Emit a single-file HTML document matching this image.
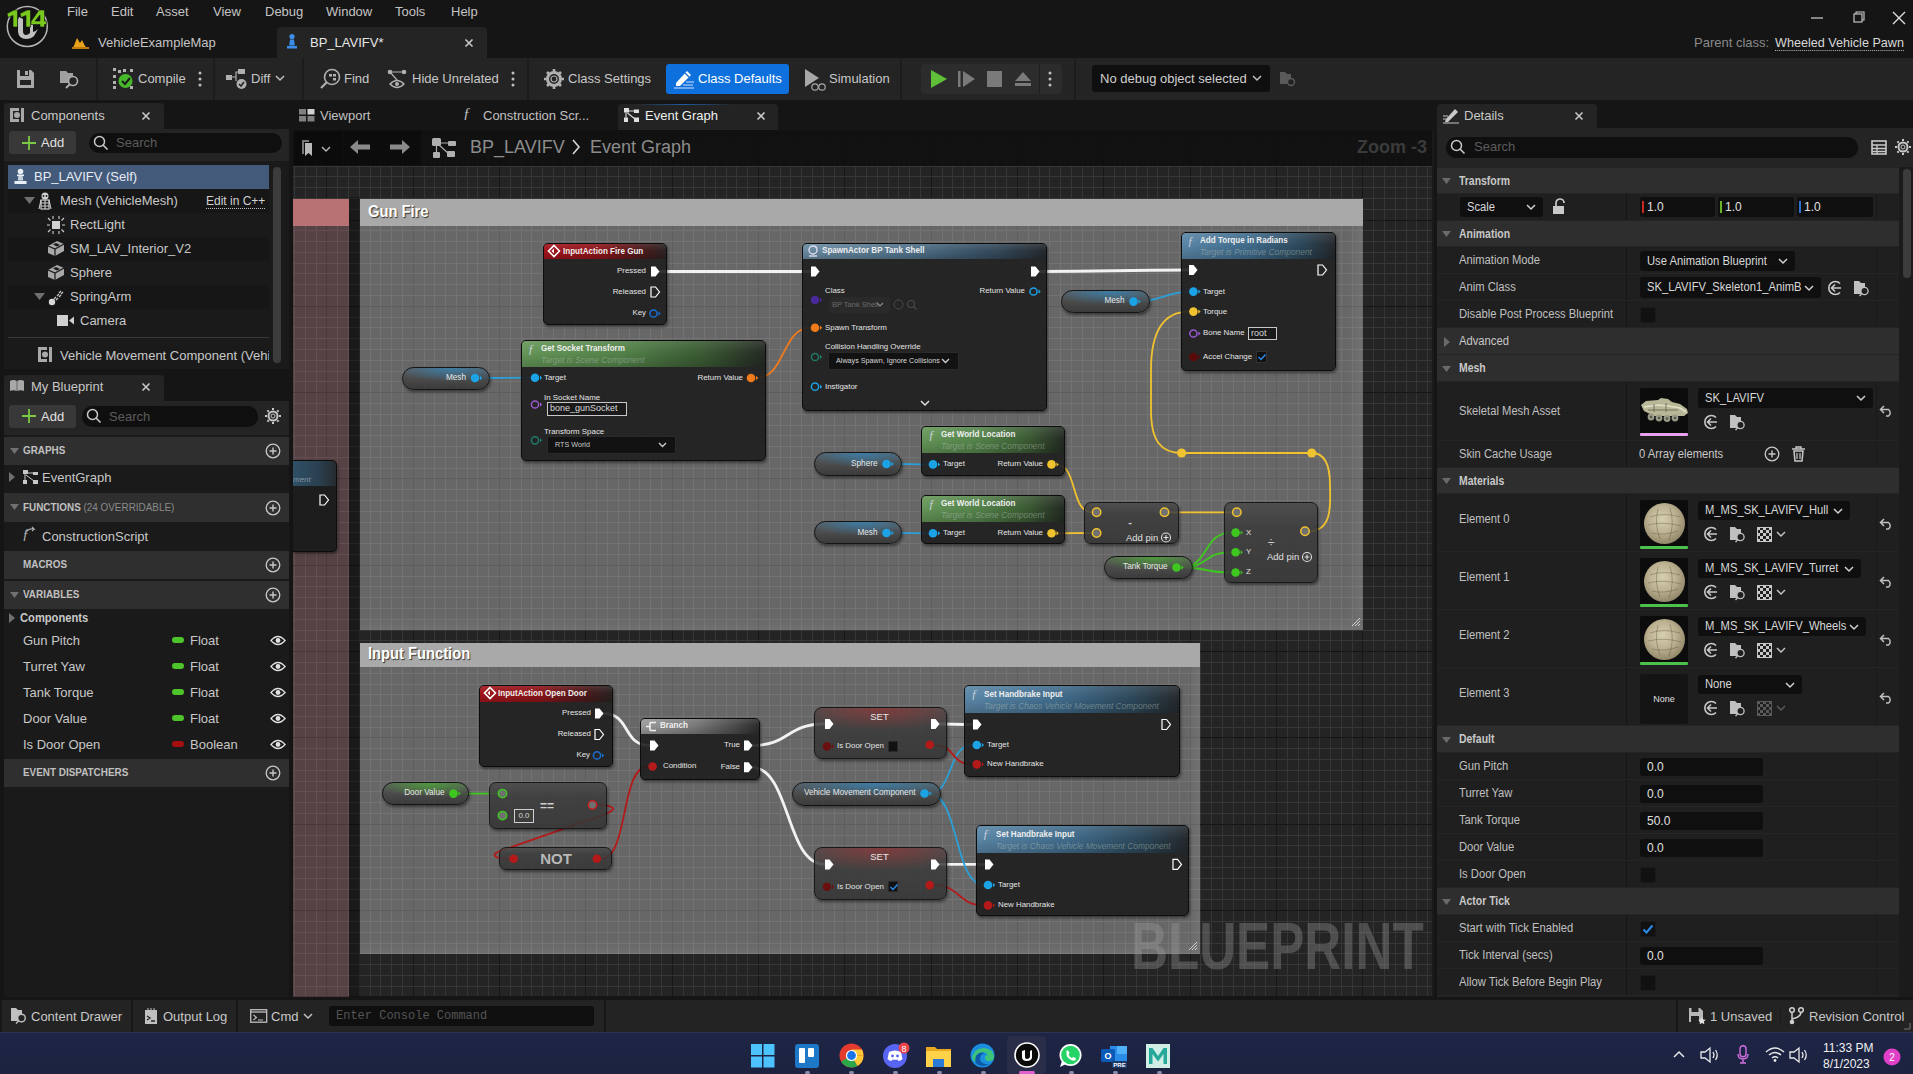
<!DOCTYPE html>
<html><head><meta charset="utf-8">
<style>
*{box-sizing:border-box;margin:0;padding:0}
html,body{width:1913px;height:1074px;overflow:hidden;background:#151515;font-family:"Liberation Sans",sans-serif;color:#c0c0c0;position:relative}
.a{position:absolute}
.t{position:absolute;white-space:nowrap;line-height:1}
svg{position:absolute;overflow:visible}
</style></head><body>


<!-- ============ TITLE BAR ============ -->
<div class="a" style="left:0;top:0;width:1913px;height:58px;background:#151515"></div>
<svg style="left:0;top:0" width="60" height="58">
 <circle cx="27.3" cy="26.5" r="20" fill="#121212" stroke="#b4b4b4" stroke-width="1.5"/>
 <path d="M19 17 q-2 3 -1 7 l0 8 q1 7 8 7 q5 0 8 -3 l4 -7 q-3 3 -5 3 l0 -12 q-2 2 -3 3 l0 10 q-2 2 -4 2 q-3 0 -3 -4 l0 -12 q-2 -1 -4 -2z" fill="#c0c0c0"/>
 <g fill="#78c81e" stroke="#121212" stroke-width="0.6"><path d="M7,13.5 L14,10 L17.5,10 L17.5,27 L13,27 L13,15.5 L8,17.5 Z"/><path d="M20,13.5 L27,10 L30.5,10 L30.5,27 L26,27 L26,15.5 L21,17.5 Z"/><path fill-rule="evenodd" d="M39,10 L44.5,10 L44.5,21 L46.5,21 L46.5,24.5 L44.5,24.5 L44.5,27 L40,27 L40,24.5 L31,24.5 L31,21.5 Z M35,21 L40,21 L40,15 Z"/></g>
</svg>
<div class="t" style="left:67px;top:5px;font-size:13px;color:#c4c4c4">File</div>
<div class="t" style="left:111px;top:5px;font-size:13px;color:#c4c4c4">Edit</div>
<div class="t" style="left:156px;top:5px;font-size:13px;color:#c4c4c4">Asset</div>
<div class="t" style="left:213px;top:5px;font-size:13px;color:#c4c4c4">View</div>
<div class="t" style="left:265px;top:5px;font-size:13px;color:#c4c4c4">Debug</div>
<div class="t" style="left:326px;top:5px;font-size:13px;color:#c4c4c4">Window</div>
<div class="t" style="left:395px;top:5px;font-size:13px;color:#c4c4c4">Tools</div>
<div class="t" style="left:451px;top:5px;font-size:13px;color:#c4c4c4">Help</div>
<!-- map tab -->
<svg style="left:72px;top:34px" width="18" height="16"><path d="M1 14 L5 4 L8 9 L10 6 L13 12 L15 14z" fill="#e8a21a"/><rect x="0" y="13" width="17" height="2" fill="#c07a10"/></svg>
<div class="t" style="left:98px;top:36px;font-size:13px;color:#c4c4c4">VehicleExampleMap</div>
<!-- active tab -->
<div class="a" style="left:277px;top:27px;width:210px;height:31px;background:#242424;border-radius:4px 4px 0 0"></div>
<svg style="left:285px;top:33px" width="14" height="18"><circle cx="7" cy="3.5" r="2.6" fill="#3b8ee8"/><path d="M5 6.5h4l0.8 6h-5.6z" fill="#3b8ee8"/><rect x="2" y="13" width="10" height="2.5" fill="#3b8ee8"/></svg>
<div class="t" style="left:310px;top:36px;font-size:13px;color:#e6e6e6">BP_LAVIFV*</div>
<svg style="left:464px;top:38px" width="10" height="10"><path d="M1.5 1.5L8.5 8.5M8.5 1.5L1.5 8.5" stroke="#c8c8c8" stroke-width="1.6"/></svg>
<!-- window controls -->
<svg style="left:1808px;top:10px" width="100" height="16">
 <path d="M3 8h12" stroke="#d0d0d0" stroke-width="1.2"/>
 <rect x="46" y="4" width="8" height="8" fill="none" stroke="#d0d0d0" stroke-width="1.1"/><path d="M48 4V2h8v8h-2" fill="none" stroke="#d0d0d0" stroke-width="1.1"/>
 <path d="M85 2l12 12M97 2l-12 12" stroke="#e0e0e0" stroke-width="1.4"/>
</svg>
<div class="t" style="left:1694px;top:36px;font-size:13px;color:#8a8a8a">Parent class:</div>
<div class="t" style="left:1775px;top:36px;font-size:13px;color:#d8d8d8;border-bottom:1px dotted #bbb;padding-bottom:1px;transform:scaleX(0.97);transform-origin:left">Wheeled Vehicle Pawn</div>

<!-- ============ TOOLBAR ============ -->
<div class="a" style="left:0;top:58px;width:1913px;height:42px;background:#242424"></div>
<div class="a" style="left:96px;top:58px;width:2px;height:42px;background:#1c1c1c"></div>
<div class="a" style="left:213px;top:58px;width:2px;height:42px;background:#1c1c1c"></div>
<div class="a" style="left:302px;top:58px;width:2px;height:42px;background:#1c1c1c"></div>
<div class="a" style="left:527px;top:58px;width:2px;height:42px;background:#1c1c1c"></div>
<div class="a" style="left:900px;top:58px;width:2px;height:42px;background:#1c1c1c"></div>
<div class="a" style="left:1074px;top:58px;width:2px;height:42px;background:#1c1c1c"></div>
<!-- save -->
<svg style="left:16px;top:69px" width="20" height="20"><path d="M1 1h14l3 3v15H1z" fill="#a8a8a8"/><rect x="4" y="1" width="9" height="6" fill="#242424"/><rect x="9" y="2" width="3" height="4" fill="#a8a8a8"/><rect x="4" y="11" width="11" height="5" fill="#242424"/></svg>
<!-- browse -->
<svg style="left:59px;top:68px" width="22" height="22"><path d="M1 3h6l2 2h5v5H1z" fill="#a0a0a0"/><path d="M1 6h12v9H1z" fill="#a0a0a0"/><circle cx="14" cy="13" r="4.5" fill="#242424" stroke="#b0b0b0" stroke-width="1.6"/><path d="M11 16l-4 4" stroke="#b0b0b0" stroke-width="1.8"/></svg>
<!-- compile -->
<svg style="left:113px;top:68px" width="22" height="22"><g fill="#b0b0b0"><rect x="0" y="0" width="3" height="3"/><rect x="5" y="2" width="3" height="3"/><rect x="10" y="1" width="3" height="3"/><rect x="17" y="1" width="3" height="3"/><rect x="0" y="7" width="3" height="3"/><rect x="0" y="13" width="3" height="3"/><rect x="0" y="18" width="3" height="3"/><rect x="17" y="18" width="3" height="3"/></g><circle cx="12.5" cy="13" r="7" fill="#47b82c"/><path d="M9 13l3 3l5 -6" fill="none" stroke="#1a1a1a" stroke-width="2"/></svg>
<div class="t" style="left:138px;top:72px;font-size:13px;color:#c8c8c8">Compile</div>
<svg style="left:197px;top:70px" width="6" height="18"><circle cx="3" cy="3" r="1.5" fill="#c0c0c0"/><circle cx="3" cy="9" r="1.5" fill="#c0c0c0"/><circle cx="3" cy="15" r="1.5" fill="#c0c0c0"/></svg>
<!-- diff -->
<svg style="left:226px;top:68px" width="24" height="22"><rect x="0" y="7" width="6" height="5" fill="#b0b0b0"/><rect x="12" y="1" width="7" height="5" fill="#b0b0b0"/><path d="M6 9h4v-5h2M10 9v4" fill="none" stroke="#b0b0b0" stroke-width="1.2"/><circle cx="15.5" cy="16" r="5" fill="#b0b0b0"/><path d="M13 16l2 2l3 -4" fill="none" stroke="#242424" stroke-width="1.5"/></svg>
<div class="t" style="left:251px;top:72px;font-size:13px;color:#c8c8c8">Diff</div>
<svg style="left:275px;top:75px" width="10" height="7"><path d="M1 1l4 4l4 -4" fill="none" stroke="#c0c0c0" stroke-width="1.5"/></svg>
<!-- find -->
<svg style="left:319px;top:68px" width="22" height="22"><circle cx="13" cy="9" r="7.5" fill="none" stroke="#b0b0b0" stroke-width="1.6"/><path d="M8 14l-6 6" stroke="#b0b0b0" stroke-width="2.2"/><rect x="10" y="6" width="3" height="2.5" fill="#b0b0b0"/><rect x="14" y="6" width="3" height="2.5" fill="#b0b0b0"/><rect x="14" y="10" width="3" height="2.5" fill="#b0b0b0"/></svg>
<div class="t" style="left:344px;top:72px;font-size:13px;color:#c8c8c8">Find</div>
<!-- hide unrelated -->
<svg style="left:387px;top:68px" width="22" height="22"><circle cx="3" cy="4" r="2.3" fill="#b0b0b0"/><circle cx="17" cy="4" r="2.3" fill="#b0b0b0"/><path d="M3 4h14M3 4l7 8" stroke="#b0b0b0" stroke-width="1.2"/><path d="M3 16q7 -7 14 0q-7 7 -14 0z" fill="none" stroke="#b0b0b0" stroke-width="1.4"/><circle cx="10" cy="16" r="2" fill="#b0b0b0"/></svg>
<div class="t" style="left:412px;top:72px;font-size:13px;color:#c8c8c8">Hide Unrelated</div>
<svg style="left:510px;top:70px" width="6" height="18"><circle cx="3" cy="3" r="1.5" fill="#c0c0c0"/><circle cx="3" cy="9" r="1.5" fill="#c0c0c0"/><circle cx="3" cy="15" r="1.5" fill="#c0c0c0"/></svg>
<!-- class settings -->
<svg style="left:544px;top:68px" width="22" height="22"><g transform="translate(10 11)"><circle r="6.5" fill="none" stroke="#b0b0b0" stroke-width="3"/><circle r="3" fill="none" stroke="#b0b0b0" stroke-width="1.2"/><g stroke="#b0b0b0" stroke-width="2.6"><path d="M0 -10V-7M0 7V10M-10 0H-7M7 0H10M-7 -7L-5 -5M5 5L7 7M-7 7L-5 5M5 -5L7 -7"/></g></g></svg>
<div class="t" style="left:568px;top:72px;font-size:13px;color:#c8c8c8">Class Settings</div>
<!-- class defaults -->
<div class="a" style="left:666px;top:64px;width:123px;height:30px;background:#0e70dc;border-radius:3px"></div>
<svg style="left:673px;top:68px" width="22" height="22"><path d="M3 15L14 3l4 4L7 18H3z" fill="#fff"/><path d="M12 5l4 4" stroke="#0e70dc" stroke-width="1.2"/><path d="M1 20h20M10 17h10M13 14h8" stroke="#cfe3ff" stroke-width="1"/></svg>
<div class="t" style="left:698px;top:72px;font-size:13px;color:#ffffff">Class Defaults</div>
<!-- simulation -->
<svg style="left:803px;top:68px" width="24" height="24"><path d="M2 1l14 9l-14 9z" fill="#a8a8a8"/><circle cx="12" cy="19" r="3.2" fill="#242424" stroke="#a8a8a8" stroke-width="1.2"/><circle cx="19" cy="19" r="3.2" fill="#242424" stroke="#a8a8a8" stroke-width="1.2"/></svg>
<div class="t" style="left:829px;top:72px;font-size:13px;color:#c8c8c8">Simulation</div>
<!-- play group -->
<div class="a" style="left:921px;top:64px;width:141px;height:30px;background:#2c2c2c;border-radius:4px"></div>
<div class="a" style="left:1039px;top:64px;width:1px;height:30px;background:#1f1f1f"></div>
<svg style="left:929px;top:69px" width="20" height="20"><path d="M2 1l16 9l-16 9z" fill="#5fbf38"/></svg>
<svg style="left:958px;top:70px" width="18" height="18"><rect x="0" y="1" width="2.5" height="16" fill="#7a7a7a"/><path d="M5 1l12 8l-12 8z" fill="#7a7a7a"/></svg>
<svg style="left:986px;top:70px" width="18" height="18"><rect x="1" y="1" width="15" height="16" fill="#7a7a7a"/></svg>
<svg style="left:1013px;top:70px" width="20" height="18"><path d="M2 11L10 2l8 9z" fill="#7a7a7a"/><rect x="2" y="13" width="16" height="3" fill="#7a7a7a"/></svg>
<svg style="left:1047px;top:70px" width="6" height="18"><circle cx="3" cy="3" r="1.5" fill="#c0c0c0"/><circle cx="3" cy="9" r="1.5" fill="#c0c0c0"/><circle cx="3" cy="15" r="1.5" fill="#c0c0c0"/></svg>
<!-- debug dropdown -->
<div class="a" style="left:1092px;top:65px;width:178px;height:27px;background:#0f0f0f;border-radius:3px"></div>
<div class="t" style="left:1100px;top:72px;font-size:13px;color:#d0d0d0">No debug object selected</div>
<svg style="left:1252px;top:75px" width="10" height="7"><path d="M1 1l4 4l4 -4" fill="none" stroke="#c0c0c0" stroke-width="1.5"/></svg>
<svg style="left:1279px;top:70px" width="18" height="18"><path d="M1 2h5l2 2h4v4H1z" fill="#5a5a5a"/><path d="M1 5h10v9H1z" fill="#5a5a5a"/><circle cx="12" cy="12" r="3.5" fill="#242424" stroke="#5a5a5a" stroke-width="1.4"/></svg>

<!-- ============ LEFT PANEL ============ -->
<div class="a" style="left:0;top:100px;width:293px;height:898px;background:#151515"></div>
<!-- components tab -->
<div class="a" style="left:4px;top:103px;width:160px;height:27px;background:#242424;border-radius:4px 4px 0 0"></div>
<div class="a" style="left:4px;top:129px;width:285px;height:240px;background:#242424"></div>
<svg style="left:10px;top:108px" width="16" height="15"><path d="M0 0h9v3H3v8h6v3H0z" fill="#a8a8a8"/><circle cx="7" cy="7" r="3" fill="#a8a8a8"/><rect x="11" y="0" width="3" height="14" fill="#a8a8a8"/></svg>
<div class="t" style="left:31px;top:109px;font-size:13px;color:#c8c8c8">Components</div>
<svg style="left:141px;top:111px" width="10" height="10"><path d="M1.5 1.5L8.5 8.5M8.5 1.5L1.5 8.5" stroke="#c8c8c8" stroke-width="1.6"/></svg>
<div class="a" style="left:9px;top:131px;width:67px;height:23px;background:#383838;border-radius:3px"></div>
<svg style="left:22px;top:136px" width="14" height="14"><path d="M7 0v14M0 7h14" stroke="#7cc943" stroke-width="1.8"/></svg>
<div class="t" style="left:41px;top:136px;font-size:13px;color:#e0e0e0">Add</div>
<div class="a" style="left:89px;top:133px;width:193px;height:20px;background:#0f0f0f;border-radius:10px"></div>
<svg style="left:93px;top:135px" width="16" height="16"><circle cx="6.5" cy="6.5" r="5" fill="none" stroke="#c8c8c8" stroke-width="1.5"/><path d="M10 10l4.5 4.5" stroke="#c8c8c8" stroke-width="1.6"/></svg>
<div class="t" style="left:116px;top:136px;font-size:13px;color:#5c5c5c">Search</div>
<div class="a" style="left:4px;top:161px;width:285px;height:208px;background:#1a1a1a"></div>
<!-- tree rows -->
<div class="a" style="left:8px;top:165px;width:261px;height:24px;background:#435a7a"></div>
<div class="a" style="left:8px;top:189px;width:261px;height:24px;background:#161616"></div>
<div class="a" style="left:8px;top:237px;width:261px;height:24px;background:#161616"></div>
<div class="a" style="left:8px;top:285px;width:261px;height:24px;background:#161616"></div>
<div class="a" style="left:8px;top:337px;width:261px;height:1px;background:#3a3a3a"></div>
<svg style="left:14px;top:168px" width="13" height="17"><circle cx="6.5" cy="3.5" r="2.8" fill="#e8eef5"/><path d="M4.5 7h4l0.7 5.5h-5.4z" fill="#c8d2de"/><rect x="3" y="6.5" width="7" height="1.6" fill="#e8eef5"/><rect x="0.5" y="13" width="12" height="3" fill="#e8eef5"/></svg>
<div class="t" style="left:34px;top:170px;font-size:13px;color:#e6ecf4">BP_LAVIFV (Self)</div>
<svg style="left:24px;top:197px" width="12" height="8"><path d="M0 0h11l-5.5 7z" fill="#707070"/></svg>
<svg style="left:38px;top:192px" width="15" height="18"><circle cx="7" cy="4" r="3.5" fill="#d0d0d0"/><rect x="3" y="8" width="8" height="9" fill="none" stroke="#d0d0d0" stroke-width="1.2"/><path d="M3 11h8M3 14h8M7 8v9M1 17l2 -9M13 17l-2 -9" stroke="#d0d0d0" stroke-width="1.1"/><circle cx="5.5" cy="4" r="0.9" fill="#1a1a1a"/><circle cx="8.5" cy="4" r="0.9" fill="#1a1a1a"/></svg>
<div class="t" style="left:60px;top:194px;font-size:13px;color:#c8c8c8">Mesh (VehicleMesh)</div>
<div class="t" style="left:206px;top:195px;font-size:12px;color:#d0d0d0;border-bottom:1px dotted #c0c0c0;padding-bottom:1px">Edit in C++</div>
<svg style="left:47px;top:216px" width="18" height="18"><rect x="5" y="5" width="8" height="8" fill="#d0d0d0"/><g stroke="#d0d0d0" stroke-width="1.1"><path d="M6 0v3M12 0v3M6 15v3M12 15v3M0 9h3M15 9h3M1 2l2.5 2.5M17 2l-2.5 2.5M1 16l2.5-2.5M17 16l-2.5-2.5"/></g></svg>
<div class="t" style="left:70px;top:218px;font-size:13px;color:#c8c8c8">RectLight</div>
<svg style="left:47px;top:240px" width="18" height="17"><path d="M1 6l9 -5l7 3v7l-9 5l-7 -3z" fill="#a8a8a8"/><path d="M1 6l7 3l9 -5M8 9v7" stroke="#1a1a1a" stroke-width="1.2" fill="none"/><path d="M6 4.5l4 2l3 -1.5l-4 -2z" fill="#1a1a1a"/></svg>
<div class="t" style="left:70px;top:242px;font-size:13px;color:#c8c8c8">SM_LAV_Interior_V2</div>
<svg style="left:47px;top:264px" width="18" height="17"><path d="M1 6l9 -5l7 3v7l-9 5l-7 -3z" fill="#a8a8a8"/><path d="M1 6l7 3l9 -5M8 9v7" stroke="#1a1a1a" stroke-width="1.2" fill="none"/><path d="M6 4.5l4 2l3 -1.5l-4 -2z" fill="#1a1a1a"/></svg>
<div class="t" style="left:70px;top:266px;font-size:13px;color:#c8c8c8">Sphere</div>
<svg style="left:34px;top:293px" width="12" height="8"><path d="M0 0h11l-5.5 7z" fill="#707070"/></svg>
<svg style="left:48px;top:288px" width="16" height="18"><circle cx="4" cy="14" r="3.2" fill="#d8d8d8"/><path d="M6 11l2 -2M8 12l2 -2M9 8l2-2M11 9l2-2M11 5l2 -2M13 6l2 -2" stroke="#c8c8c8" stroke-width="1.2"/></svg>
<div class="t" style="left:70px;top:290px;font-size:13px;color:#c8c8c8">SpringArm</div>
<svg style="left:57px;top:314px" width="18" height="14"><rect x="0" y="1" width="11" height="11" fill="#d0d0d0"/><path d="M12 6.5l5 -4v8z" fill="#d0d0d0"/></svg>
<div class="t" style="left:80px;top:314px;font-size:13px;color:#c8c8c8">Camera</div>
<svg style="left:38px;top:347px" width="15" height="16"><path d="M0 0h9v3H3v9h6v3H0z" fill="#a8a8a8"/><circle cx="7" cy="7.5" r="3" fill="#a8a8a8"/><rect x="11" y="0" width="3" height="15" fill="#a8a8a8"/></svg>
<div class="a" style="left:60px;top:349px;width:209px;height:16px;overflow:hidden"><div class="t" style="left:0;top:0;font-size:13px;color:#c8c8c8">Vehicle Movement Component (Vehicle)</div></div>
<div class="a" style="left:273px;top:167px;width:8px;height:196px;background:#3c3c3c;border-radius:4px"></div>

<!-- my blueprint tab -->
<div class="a" style="left:4px;top:375px;width:160px;height:27px;background:#242424;border-radius:4px 4px 0 0"></div>
<div class="a" style="left:4px;top:401px;width:285px;height:596px;background:#1a1a1a"></div>
<div class="a" style="left:4px;top:401px;width:285px;height:34px;background:#242424"></div>
<svg style="left:9px;top:379px" width="16" height="14"><path d="M1 2q3 -2 7 0q4 -2 7 0v10q-3 -1.5 -7 0q-4 -1.5 -7 0z" fill="#a8a8a8"/><path d="M8 2v10" stroke="#555" stroke-width="0.8"/></svg>
<div class="t" style="left:31px;top:380px;font-size:13px;color:#c8c8c8">My Blueprint</div>
<svg style="left:141px;top:382px" width="10" height="10"><path d="M1.5 1.5L8.5 8.5M8.5 1.5L1.5 8.5" stroke="#c8c8c8" stroke-width="1.6"/></svg>
<div class="a" style="left:9px;top:405px;width:67px;height:23px;background:#383838;border-radius:3px"></div>
<svg style="left:22px;top:409px" width="14" height="14"><path d="M7 0v14M0 7h14" stroke="#7cc943" stroke-width="1.8"/></svg>
<div class="t" style="left:41px;top:410px;font-size:13px;color:#e0e0e0">Add</div>
<div class="a" style="left:82px;top:406px;width:176px;height:21px;background:#0f0f0f;border-radius:10px"></div>
<svg style="left:86px;top:408px" width="16" height="16"><circle cx="6.5" cy="6.5" r="5" fill="none" stroke="#c8c8c8" stroke-width="1.5"/><path d="M10 10l4.5 4.5" stroke="#c8c8c8" stroke-width="1.6"/></svg>
<div class="t" style="left:109px;top:410px;font-size:13px;color:#5c5c5c">Search</div>
<svg style="left:265px;top:408px" width="16" height="16"><g transform="translate(8 8)"><circle r="4.5" fill="none" stroke="#c8c8c8" stroke-width="2"/><circle r="2" fill="none" stroke="#c8c8c8" stroke-width="1"/><g stroke="#c8c8c8" stroke-width="2"><path d="M0 -8V-6M0 6V8M-8 0H-6M6 0H8M-5.6 -5.6L-4.2 -4.2M4.2 4.2L5.6 5.6M-5.6 5.6L-4.2 4.2M4.2 -4.2L5.6 -5.6"/></g></g></svg>
<!-- section headers -->
<div class="a" style="left:4px;top:437px;width:285px;height:28px;background:#2f2f2f"></div>
<svg style="left:10px;top:448px" width="10" height="7"><path d="M0 0h9l-4.5 6z" fill="#707070"/></svg>
<div class="t" style="left:23px;top:445px;font-size:11px;font-weight:bold;color:#c0c0c0;transform:scaleX(0.9);transform-origin:left">GRAPHS</div>
<svg style="left:265px;top:443px" width="16" height="16"><circle cx="8" cy="8" r="6.8" fill="none" stroke="#c8c8c8" stroke-width="1.3"/><path d="M8 4.5v7M4.5 8h7" stroke="#c8c8c8" stroke-width="1.4"/></svg>
<svg style="left:9px;top:472px" width="7" height="11"><path d="M0 0v10l6 -5z" fill="#707070"/></svg>
<svg style="left:23px;top:470px" width="16" height="14"><rect x="0" y="0" width="5" height="4" fill="#c8c8c8"/><rect x="10" y="2" width="5" height="3" fill="#c8c8c8"/><rect x="0" y="10" width="4" height="4" fill="#c8c8c8"/><rect x="10" y="10" width="5" height="4" fill="#c8c8c8"/><path d="M2 4v6M5 3h5M3 5l8 6" stroke="#c8c8c8" stroke-width="1"/></svg>
<div class="t" style="left:42px;top:471px;font-size:13px;color:#c8c8c8">EventGraph</div>
<div class="a" style="left:4px;top:493px;width:285px;height:29px;background:#2f2f2f"></div>
<svg style="left:10px;top:504px" width="10" height="7"><path d="M0 0h9l-4.5 6z" fill="#707070"/></svg>
<div class="t" style="left:23px;top:502px;font-size:11px;color:#c0c0c0;transform:scaleX(0.9);transform-origin:left"><b>FUNCTIONS</b> <span style="color:#8a8a8a">(24 OVERRIDABLE)</span></div>
<svg style="left:265px;top:500px" width="16" height="16"><circle cx="8" cy="8" r="6.8" fill="none" stroke="#c8c8c8" stroke-width="1.3"/><path d="M8 4.5v7M4.5 8h7" stroke="#c8c8c8" stroke-width="1.4"/></svg>
<div class="t" style="left:22px;top:527px;font-size:15px;font-style:italic;font-family:'Liberation Serif';color:#b0b0b0">&#402;</div>
<svg style="left:25px;top:527px" width="12" height="6"><path d="M1 5q3 -4 8 -3l-2 -2M9 2l-2 2" stroke="#b0b0b0" stroke-width="1.1" fill="none"/></svg>
<div class="t" style="left:42px;top:530px;font-size:13px;color:#c8c8c8">ConstructionScript</div>
<div class="a" style="left:4px;top:551px;width:285px;height:28px;background:#2f2f2f"></div>
<div class="t" style="left:23px;top:559px;font-size:11px;font-weight:bold;color:#c0c0c0;transform:scaleX(0.9);transform-origin:left">MACROS</div>
<svg style="left:265px;top:557px" width="16" height="16"><circle cx="8" cy="8" r="6.8" fill="none" stroke="#c8c8c8" stroke-width="1.3"/><path d="M8 4.5v7M4.5 8h7" stroke="#c8c8c8" stroke-width="1.4"/></svg>
<div class="a" style="left:4px;top:581px;width:285px;height:28px;background:#2f2f2f"></div>
<svg style="left:10px;top:592px" width="10" height="7"><path d="M0 0h9l-4.5 6z" fill="#707070"/></svg>
<div class="t" style="left:23px;top:589px;font-size:11px;font-weight:bold;color:#c0c0c0;transform:scaleX(0.9);transform-origin:left">VARIABLES</div>
<svg style="left:265px;top:587px" width="16" height="16"><circle cx="8" cy="8" r="6.8" fill="none" stroke="#c8c8c8" stroke-width="1.3"/><path d="M8 4.5v7M4.5 8h7" stroke="#c8c8c8" stroke-width="1.4"/></svg>
<svg style="left:9px;top:613px" width="7" height="11"><path d="M0 0v10l6 -5z" fill="#707070"/></svg>
<div class="t" style="left:20px;top:612px;font-size:12px;font-weight:bold;color:#c8c8c8;transform:scaleX(0.93);transform-origin:left">Components</div>
<div class="t" style="left:23px;top:634px;font-size:13px;color:#c8c8c8">Gun Pitch</div>
<div class="a" style="left:172px;top:637px;width:12px;height:6px;background:#4fc42a;border-radius:3px"></div>
<div class="t" style="left:190px;top:634px;font-size:13px;color:#c8c8c8">Float</div>
<svg style="left:270px;top:635px" width="16" height="11"><path d="M1 5.5q7 -8 14 0q-7 8 -14 0z" fill="none" stroke="#e0e0e0" stroke-width="1.4"/><circle cx="8" cy="5.5" r="2.4" fill="#e0e0e0"/></svg>
<div class="t" style="left:23px;top:660px;font-size:13px;color:#c8c8c8">Turret Yaw</div>
<div class="a" style="left:172px;top:663px;width:12px;height:6px;background:#4fc42a;border-radius:3px"></div>
<div class="t" style="left:190px;top:660px;font-size:13px;color:#c8c8c8">Float</div>
<svg style="left:270px;top:661px" width="16" height="11"><path d="M1 5.5q7 -8 14 0q-7 8 -14 0z" fill="none" stroke="#e0e0e0" stroke-width="1.4"/><circle cx="8" cy="5.5" r="2.4" fill="#e0e0e0"/></svg>
<div class="t" style="left:23px;top:686px;font-size:13px;color:#c8c8c8">Tank Torque</div>
<div class="a" style="left:172px;top:689px;width:12px;height:6px;background:#4fc42a;border-radius:3px"></div>
<div class="t" style="left:190px;top:686px;font-size:13px;color:#c8c8c8">Float</div>
<svg style="left:270px;top:687px" width="16" height="11"><path d="M1 5.5q7 -8 14 0q-7 8 -14 0z" fill="none" stroke="#e0e0e0" stroke-width="1.4"/><circle cx="8" cy="5.5" r="2.4" fill="#e0e0e0"/></svg>
<div class="t" style="left:23px;top:712px;font-size:13px;color:#c8c8c8">Door Value</div>
<div class="a" style="left:172px;top:715px;width:12px;height:6px;background:#4fc42a;border-radius:3px"></div>
<div class="t" style="left:190px;top:712px;font-size:13px;color:#c8c8c8">Float</div>
<svg style="left:270px;top:713px" width="16" height="11"><path d="M1 5.5q7 -8 14 0q-7 8 -14 0z" fill="none" stroke="#e0e0e0" stroke-width="1.4"/><circle cx="8" cy="5.5" r="2.4" fill="#e0e0e0"/></svg>
<div class="t" style="left:23px;top:738px;font-size:13px;color:#c8c8c8">Is Door Open</div>
<div class="a" style="left:172px;top:741px;width:12px;height:6px;background:#a80e0e;border-radius:3px"></div>
<div class="t" style="left:190px;top:738px;font-size:13px;color:#c8c8c8">Boolean</div>
<svg style="left:270px;top:739px" width="16" height="11"><path d="M1 5.5q7 -8 14 0q-7 8 -14 0z" fill="none" stroke="#e0e0e0" stroke-width="1.4"/><circle cx="8" cy="5.5" r="2.4" fill="#e0e0e0"/></svg>

<div class="a" style="left:4px;top:759px;width:285px;height:28px;background:#2f2f2f"></div>
<div class="t" style="left:23px;top:767px;font-size:11px;font-weight:bold;color:#c0c0c0;transform:scaleX(0.9);transform-origin:left">EVENT DISPATCHERS</div>
<svg style="left:265px;top:765px" width="16" height="16"><circle cx="8" cy="8" r="6.8" fill="none" stroke="#c8c8c8" stroke-width="1.3"/><path d="M8 4.5v7M4.5 8h7" stroke="#c8c8c8" stroke-width="1.4"/></svg>

<div class="a" style="left:293px;top:100px;width:1141px;height:898px;background:#151515"></div>
<div class="a" style="left:293px;top:130px;width:1141px;height:868px;background:#242424;overflow:hidden">
<svg style="left:0;top:0" width="1141" height="868"><rect x="-10" y="0" width="1" height="868" fill="#363636"/><rect x="1" y="0" width="1" height="868" fill="#363636"/><rect x="12" y="0" width="1" height="868" fill="#363636"/><rect x="23" y="0" width="1" height="868" fill="#363636"/><rect x="33" y="0" width="1" height="868" fill="#161616"/><rect x="44" y="0" width="1" height="868" fill="#363636"/><rect x="55" y="0" width="1" height="868" fill="#363636"/><rect x="66" y="0" width="1" height="868" fill="#363636"/><rect x="77" y="0" width="1" height="868" fill="#363636"/><rect x="87" y="0" width="1" height="868" fill="#363636"/><rect x="98" y="0" width="1" height="868" fill="#363636"/><rect x="109" y="0" width="1" height="868" fill="#363636"/><rect x="120" y="0" width="1" height="868" fill="#161616"/><rect x="131" y="0" width="1" height="868" fill="#363636"/><rect x="141" y="0" width="1" height="868" fill="#363636"/><rect x="152" y="0" width="1" height="868" fill="#363636"/><rect x="163" y="0" width="1" height="868" fill="#363636"/><rect x="174" y="0" width="1" height="868" fill="#363636"/><rect x="184" y="0" width="1" height="868" fill="#363636"/><rect x="195" y="0" width="1" height="868" fill="#363636"/><rect x="206" y="0" width="1" height="868" fill="#161616"/><rect x="217" y="0" width="1" height="868" fill="#363636"/><rect x="228" y="0" width="1" height="868" fill="#363636"/><rect x="238" y="0" width="1" height="868" fill="#363636"/><rect x="249" y="0" width="1" height="868" fill="#363636"/><rect x="260" y="0" width="1" height="868" fill="#363636"/><rect x="271" y="0" width="1" height="868" fill="#363636"/><rect x="282" y="0" width="1" height="868" fill="#363636"/><rect x="292" y="0" width="1" height="868" fill="#161616"/><rect x="303" y="0" width="1" height="868" fill="#363636"/><rect x="314" y="0" width="1" height="868" fill="#363636"/><rect x="325" y="0" width="1" height="868" fill="#363636"/><rect x="336" y="0" width="1" height="868" fill="#363636"/><rect x="346" y="0" width="1" height="868" fill="#363636"/><rect x="357" y="0" width="1" height="868" fill="#363636"/><rect x="368" y="0" width="1" height="868" fill="#363636"/><rect x="379" y="0" width="1" height="868" fill="#161616"/><rect x="390" y="0" width="1" height="868" fill="#363636"/><rect x="400" y="0" width="1" height="868" fill="#363636"/><rect x="411" y="0" width="1" height="868" fill="#363636"/><rect x="422" y="0" width="1" height="868" fill="#363636"/><rect x="433" y="0" width="1" height="868" fill="#363636"/><rect x="443" y="0" width="1" height="868" fill="#363636"/><rect x="454" y="0" width="1" height="868" fill="#363636"/><rect x="465" y="0" width="1" height="868" fill="#161616"/><rect x="476" y="0" width="1" height="868" fill="#363636"/><rect x="487" y="0" width="1" height="868" fill="#363636"/><rect x="497" y="0" width="1" height="868" fill="#363636"/><rect x="508" y="0" width="1" height="868" fill="#363636"/><rect x="519" y="0" width="1" height="868" fill="#363636"/><rect x="530" y="0" width="1" height="868" fill="#363636"/><rect x="541" y="0" width="1" height="868" fill="#363636"/><rect x="551" y="0" width="1" height="868" fill="#161616"/><rect x="562" y="0" width="1" height="868" fill="#363636"/><rect x="573" y="0" width="1" height="868" fill="#363636"/><rect x="584" y="0" width="1" height="868" fill="#363636"/><rect x="595" y="0" width="1" height="868" fill="#363636"/><rect x="605" y="0" width="1" height="868" fill="#363636"/><rect x="616" y="0" width="1" height="868" fill="#363636"/><rect x="627" y="0" width="1" height="868" fill="#363636"/><rect x="638" y="0" width="1" height="868" fill="#161616"/><rect x="649" y="0" width="1" height="868" fill="#363636"/><rect x="659" y="0" width="1" height="868" fill="#363636"/><rect x="670" y="0" width="1" height="868" fill="#363636"/><rect x="681" y="0" width="1" height="868" fill="#363636"/><rect x="692" y="0" width="1" height="868" fill="#363636"/><rect x="702" y="0" width="1" height="868" fill="#363636"/><rect x="713" y="0" width="1" height="868" fill="#363636"/><rect x="724" y="0" width="1" height="868" fill="#161616"/><rect x="735" y="0" width="1" height="868" fill="#363636"/><rect x="746" y="0" width="1" height="868" fill="#363636"/><rect x="756" y="0" width="1" height="868" fill="#363636"/><rect x="767" y="0" width="1" height="868" fill="#363636"/><rect x="778" y="0" width="1" height="868" fill="#363636"/><rect x="789" y="0" width="1" height="868" fill="#363636"/><rect x="800" y="0" width="1" height="868" fill="#363636"/><rect x="810" y="0" width="1" height="868" fill="#161616"/><rect x="821" y="0" width="1" height="868" fill="#363636"/><rect x="832" y="0" width="1" height="868" fill="#363636"/><rect x="843" y="0" width="1" height="868" fill="#363636"/><rect x="854" y="0" width="1" height="868" fill="#363636"/><rect x="864" y="0" width="1" height="868" fill="#363636"/><rect x="875" y="0" width="1" height="868" fill="#363636"/><rect x="886" y="0" width="1" height="868" fill="#363636"/><rect x="897" y="0" width="1" height="868" fill="#161616"/><rect x="907" y="0" width="1" height="868" fill="#363636"/><rect x="918" y="0" width="1" height="868" fill="#363636"/><rect x="929" y="0" width="1" height="868" fill="#363636"/><rect x="940" y="0" width="1" height="868" fill="#363636"/><rect x="951" y="0" width="1" height="868" fill="#363636"/><rect x="961" y="0" width="1" height="868" fill="#363636"/><rect x="972" y="0" width="1" height="868" fill="#363636"/><rect x="983" y="0" width="1" height="868" fill="#161616"/><rect x="994" y="0" width="1" height="868" fill="#363636"/><rect x="1005" y="0" width="1" height="868" fill="#363636"/><rect x="1015" y="0" width="1" height="868" fill="#363636"/><rect x="1026" y="0" width="1" height="868" fill="#363636"/><rect x="1037" y="0" width="1" height="868" fill="#363636"/><rect x="1048" y="0" width="1" height="868" fill="#363636"/><rect x="1059" y="0" width="1" height="868" fill="#363636"/><rect x="1069" y="0" width="1" height="868" fill="#161616"/><rect x="1080" y="0" width="1" height="868" fill="#363636"/><rect x="1091" y="0" width="1" height="868" fill="#363636"/><rect x="1102" y="0" width="1" height="868" fill="#363636"/><rect x="1113" y="0" width="1" height="868" fill="#363636"/><rect x="1123" y="0" width="1" height="868" fill="#363636"/><rect x="1134" y="0" width="1" height="868" fill="#363636"/><rect x="0" y="-8" width="1141" height="1" fill="#363636"/><rect x="0" y="3" width="1141" height="1" fill="#161616"/><rect x="0" y="14" width="1141" height="1" fill="#363636"/><rect x="0" y="25" width="1141" height="1" fill="#363636"/><rect x="0" y="36" width="1141" height="1" fill="#363636"/><rect x="0" y="46" width="1141" height="1" fill="#363636"/><rect x="0" y="57" width="1141" height="1" fill="#363636"/><rect x="0" y="68" width="1141" height="1" fill="#363636"/><rect x="0" y="79" width="1141" height="1" fill="#363636"/><rect x="0" y="90" width="1141" height="1" fill="#161616"/><rect x="0" y="100" width="1141" height="1" fill="#363636"/><rect x="0" y="111" width="1141" height="1" fill="#363636"/><rect x="0" y="122" width="1141" height="1" fill="#363636"/><rect x="0" y="133" width="1141" height="1" fill="#363636"/><rect x="0" y="143" width="1141" height="1" fill="#363636"/><rect x="0" y="154" width="1141" height="1" fill="#363636"/><rect x="0" y="165" width="1141" height="1" fill="#363636"/><rect x="0" y="176" width="1141" height="1" fill="#161616"/><rect x="0" y="187" width="1141" height="1" fill="#363636"/><rect x="0" y="197" width="1141" height="1" fill="#363636"/><rect x="0" y="208" width="1141" height="1" fill="#363636"/><rect x="0" y="219" width="1141" height="1" fill="#363636"/><rect x="0" y="230" width="1141" height="1" fill="#363636"/><rect x="0" y="241" width="1141" height="1" fill="#363636"/><rect x="0" y="251" width="1141" height="1" fill="#363636"/><rect x="0" y="262" width="1141" height="1" fill="#161616"/><rect x="0" y="273" width="1141" height="1" fill="#363636"/><rect x="0" y="284" width="1141" height="1" fill="#363636"/><rect x="0" y="295" width="1141" height="1" fill="#363636"/><rect x="0" y="305" width="1141" height="1" fill="#363636"/><rect x="0" y="316" width="1141" height="1" fill="#363636"/><rect x="0" y="327" width="1141" height="1" fill="#363636"/><rect x="0" y="338" width="1141" height="1" fill="#363636"/><rect x="0" y="348" width="1141" height="1" fill="#161616"/><rect x="0" y="359" width="1141" height="1" fill="#363636"/><rect x="0" y="370" width="1141" height="1" fill="#363636"/><rect x="0" y="381" width="1141" height="1" fill="#363636"/><rect x="0" y="392" width="1141" height="1" fill="#363636"/><rect x="0" y="402" width="1141" height="1" fill="#363636"/><rect x="0" y="413" width="1141" height="1" fill="#363636"/><rect x="0" y="424" width="1141" height="1" fill="#363636"/><rect x="0" y="435" width="1141" height="1" fill="#161616"/><rect x="0" y="446" width="1141" height="1" fill="#363636"/><rect x="0" y="456" width="1141" height="1" fill="#363636"/><rect x="0" y="467" width="1141" height="1" fill="#363636"/><rect x="0" y="478" width="1141" height="1" fill="#363636"/><rect x="0" y="489" width="1141" height="1" fill="#363636"/><rect x="0" y="500" width="1141" height="1" fill="#363636"/><rect x="0" y="510" width="1141" height="1" fill="#363636"/><rect x="0" y="521" width="1141" height="1" fill="#161616"/><rect x="0" y="532" width="1141" height="1" fill="#363636"/><rect x="0" y="543" width="1141" height="1" fill="#363636"/><rect x="0" y="554" width="1141" height="1" fill="#363636"/><rect x="0" y="564" width="1141" height="1" fill="#363636"/><rect x="0" y="575" width="1141" height="1" fill="#363636"/><rect x="0" y="586" width="1141" height="1" fill="#363636"/><rect x="0" y="597" width="1141" height="1" fill="#363636"/><rect x="0" y="607" width="1141" height="1" fill="#161616"/><rect x="0" y="618" width="1141" height="1" fill="#363636"/><rect x="0" y="629" width="1141" height="1" fill="#363636"/><rect x="0" y="640" width="1141" height="1" fill="#363636"/><rect x="0" y="651" width="1141" height="1" fill="#363636"/><rect x="0" y="661" width="1141" height="1" fill="#363636"/><rect x="0" y="672" width="1141" height="1" fill="#363636"/><rect x="0" y="683" width="1141" height="1" fill="#363636"/><rect x="0" y="694" width="1141" height="1" fill="#161616"/><rect x="0" y="705" width="1141" height="1" fill="#363636"/><rect x="0" y="715" width="1141" height="1" fill="#363636"/><rect x="0" y="726" width="1141" height="1" fill="#363636"/><rect x="0" y="737" width="1141" height="1" fill="#363636"/><rect x="0" y="748" width="1141" height="1" fill="#363636"/><rect x="0" y="759" width="1141" height="1" fill="#363636"/><rect x="0" y="769" width="1141" height="1" fill="#363636"/><rect x="0" y="780" width="1141" height="1" fill="#161616"/><rect x="0" y="791" width="1141" height="1" fill="#363636"/><rect x="0" y="802" width="1141" height="1" fill="#363636"/><rect x="0" y="813" width="1141" height="1" fill="#363636"/><rect x="0" y="823" width="1141" height="1" fill="#363636"/><rect x="0" y="834" width="1141" height="1" fill="#363636"/><rect x="0" y="845" width="1141" height="1" fill="#363636"/><rect x="0" y="856" width="1141" height="1" fill="#363636"/><rect x="0" y="866" width="1141" height="1" fill="#161616"/></svg>
</div>
<div class="a" style="left:293px;top:199px;width:56px;height:799px;background:rgba(215,145,150,0.28);box-shadow:none"></div>
<div class="a" style="left:293px;top:199px;width:56px;height:27px;background:#b87274"></div>
<div class="a" style="left:349px;top:197px;width:11px;height:801px;background:rgba(10,10,10,0.4)"></div>
<div class="a" style="left:360px;top:199px;width:1003px;height:431px;background:rgba(255,255,255,0.305);box-shadow:inset -10px -8px 14px -4px rgba(255,255,255,0.09)"></div>
<div class="a" style="left:360px;top:199px;width:1003px;height:27px;background:#a9a9a9"></div>
<div class="t" style="left:368px;top:203.7px;font-size:16px;font-weight:bold;color:#fff;text-shadow:1px 1px 1px #333;transform:scaleX(0.92);transform-origin:left">Gun Fire</div>
<div class="a" style="left:360px;top:643px;width:840px;height:311px;background:rgba(255,255,255,0.305);box-shadow:inset -10px -8px 14px -4px rgba(255,255,255,0.09)"></div>
<div class="a" style="left:360px;top:643px;width:840px;height:24px;background:#a9a9a9"></div>
<div class="t" style="left:368px;top:646.2px;font-size:16px;font-weight:bold;color:#fff;text-shadow:1px 1px 1px #333;transform:scaleX(0.92);transform-origin:left">Input Function</div>
<svg style="left:1351px;top:617px" width="10" height="10"><path d="M9 1L1 9M9 4L4 9M9 7L7 9" stroke="#ddd" stroke-width="0.9"/></svg>
<svg style="left:1188px;top:941px" width="10" height="10"><path d="M9 1L1 9M9 4L4 9M9 7L7 9" stroke="#ddd" stroke-width="0.9"/></svg>
<div class="t" style="left:1131px;top:913px;font-size:66px;font-weight:bold;color:rgba(160,160,160,0.34);transform:scaleX(0.775);transform-origin:left;letter-spacing:0px">BLUEPRINT</div>
<svg style="left:299px;top:109px" width="16" height="13"><g fill="#808080"><rect x="0" y="0" width="7" height="5.5"/><rect x="8.5" y="0" width="7" height="5.5" fill="#d0d0d0"/><rect x="0" y="7" width="7" height="5.5"/><rect x="8.5" y="7" width="7" height="5.5"/></g></svg>
<div class="t" style="left:320px;top:109px;font-size:13px;color:#c0c0c0">Viewport</div>
<div class="t" style="left:463px;top:106px;font-size:15px;font-style:italic;font-family:'Liberation Serif';color:#c0c0c0">&#402;</div>
<div class="t" style="left:483px;top:109px;font-size:13px;color:#c0c0c0">Construction Scr...</div>
<div class="a" style="left:618px;top:104px;width:160px;height:26px;background:#232323;border-radius:4px 4px 0 0"></div>
<div class="a" style="left:634px;top:104px;width:100px;height:1px;background:linear-gradient(90deg,rgba(30,90,160,0),#1e5aa0,rgba(30,90,160,0))"></div>
<svg style="left:624px;top:108px" width="15" height="14"><rect x="0" y="0" width="5" height="4.5" fill="#e0e0e0"/><rect x="10" y="1.5" width="5" height="3.5" fill="#e0e0e0"/><rect x="0" y="9.5" width="4" height="4.5" fill="#e0e0e0"/><rect x="10" y="9.5" width="5" height="4.5" fill="#e0e0e0"/><path d="M2 4.5v5M5 3h5M3.5 5l7.5 6" stroke="#e0e0e0" stroke-width="1.1"/></svg>
<div class="t" style="left:645px;top:109px;font-size:13px;color:#f0f0f0">Event Graph</div>
<svg style="left:756px;top:111px" width="10" height="10"><path d="M1.5 1.5L8.5 8.5M8.5 1.5L1.5 8.5" stroke="#c8c8c8" stroke-width="1.6"/></svg>
<div class="a" style="left:293px;top:130px;width:1141px;height:36px;background:rgba(14,14,14,0.86)"></div>
<div class="a" style="left:294px;top:131px;width:48px;height:34px;background:rgba(0,0,0,0.35)"></div>
<div class="a" style="left:343px;top:131px;width:78px;height:34px;background:rgba(0,0,0,0.25)"></div>
<svg style="left:301px;top:140px" width="12" height="16"><path d="M1 0h7v2H3v12H1z" fill="#777"/><path d="M4 3h7v13l-3.5-3l-3.5 3z" fill="#b8b8b8"/></svg>
<svg style="left:321px;top:146px" width="10" height="7"><path d="M1 1l4 4l4 -4" fill="none" stroke="#b0b0b0" stroke-width="1.5"/></svg>
<svg style="left:350px;top:139px" width="22" height="16"><path d="M0 8l8-7v4.5h12v5H8V15z" fill="#8a8a8a"/></svg>
<svg style="left:389px;top:139px" width="22" height="16"><path d="M21 8l-8-7v4.5H1v5h12V15z" fill="#8a8a8a"/></svg>
<svg style="left:432px;top:138px" width="24" height="20"><rect x="0" y="0" width="9" height="8" rx="1.5" fill="#b0b0b0"/><rect x="16" y="3" width="8" height="5" rx="1" fill="#b0b0b0"/><rect x="1" y="14" width="7" height="6" rx="1" fill="#b0b0b0"/><rect x="15" y="13" width="8" height="6" rx="1" fill="#b0b0b0"/><path d="M4.5 8v6M9 5h7M7 7l9 8" stroke="#b0b0b0" stroke-width="1.2"/></svg>
<div class="t" style="left:470px;top:138px;font-size:18px;color:#8c8c8c">BP_LAVIFV</div>
<svg style="left:572px;top:139px" width="9" height="16"><path d="M1 1l6 7l-6 7" fill="none" stroke="#d8d8d8" stroke-width="1.6"/></svg>
<div class="t" style="left:590px;top:138px;font-size:18px;color:#8c8c8c">Event Graph</div>
<div class="t" style="left:1357px;top:138px;font-size:18px;font-weight:bold;color:#3b3b3b">Zoom -3</div>
<div class="a" style="left:1432px;top:130px;width:5px;height:868px;background:#1a1a1a"></div><svg style="left:0;top:0" width="1913" height="1074"><path d="M659,271.5 C735.0,271.5 735.0,271.5 811,271.5" fill="none" stroke="#f2f2f2" stroke-width="2.8" stroke-linecap="round"/><path d="M1039,271.5 C1114.0,271.5 1114.0,270 1189,270" fill="none" stroke="#f2f2f2" stroke-width="2.8" stroke-linecap="round"/><path d="M603,713.4 C631,713.4 622,745.5 650,745.5" fill="none" stroke="#f2f2f2" stroke-width="2.8" stroke-linecap="round"/><path d="M751,745.5 C791,745.5 785,724 825,724" fill="none" stroke="#f2f2f2" stroke-width="2.8" stroke-linecap="round"/><path d="M751,767.2 C791,767.2 785,864.4 825,864.4" fill="none" stroke="#f2f2f2" stroke-width="2.8" stroke-linecap="round"/><path d="M936,724 C954.5,724 954.5,724.5 973,724.5" fill="none" stroke="#f2f2f2" stroke-width="2.8" stroke-linecap="round"/><path d="M936,864.4 C960.5,864.4 960.5,864.4 985,864.4" fill="none" stroke="#f2f2f2" stroke-width="2.8" stroke-linecap="round"/><path d="M480,378 C505.0,378 505.0,377.7 530,377.7" fill="none" stroke="#2a9fd8" stroke-width="1.8" stroke-linecap="round"/><path d="M1138,301.6 C1158,301.6 1169,291.6 1189,291.6" fill="none" stroke="#2a9fd8" stroke-width="1.8" stroke-linecap="round"/><path d="M891,464 C909.5,464 909.5,464.4 928,464.4" fill="none" stroke="#2a9fd8" stroke-width="1.8" stroke-linecap="round"/><path d="M891,533 C909.5,533 909.5,533.3 928,533.3" fill="none" stroke="#2a9fd8" stroke-width="1.8" stroke-linecap="round"/><path d="M929,793.5 C953,793.5 948,745 972,745" fill="none" stroke="#2a9fd8" stroke-width="1.8" stroke-linecap="round"/><path d="M929,793.5 C959,793.5 954,885 984,885" fill="none" stroke="#2a9fd8" stroke-width="1.8" stroke-linecap="round"/><path d="M756,378 C786,378 781,327.7 811,327.7" fill="none" stroke="#f07b1a" stroke-width="1.8" stroke-linecap="round"/><path d="M1056,464.4 C1078,464.4 1070,512.3 1092,512.3" fill="none" stroke="#f1c230" stroke-width="1.8" stroke-linecap="round"/><path d="M1056,533.3 C1074.0,533.3 1074.0,533 1092,533" fill="none" stroke="#f1c230" stroke-width="1.8" stroke-linecap="round"/><path d="M1169,512.3 C1200.5,512.3 1200.5,512.3 1232,512.3" fill="none" stroke="#f1c230" stroke-width="1.8" stroke-linecap="round"/><path d="M1309,531.3 C1334,531.3 1330,500 1330,485 C1330,465 1325,453 1312,453" fill="none" stroke="#f1c230" stroke-width="1.8" stroke-linecap="round"/><path d="M1312,453 L1182,453" fill="none" stroke="#f1c230" stroke-width="1.8" stroke-linecap="round"/><path d="M1182,453 C1160,453 1151,440 1151,410 L1151,370 C1151,330 1165,311.6 1189,311.6" fill="none" stroke="#f1c230" stroke-width="1.8" stroke-linecap="round"/><path d="M458,793.6 C478.0,793.6 478.0,793.6 498,793.6" fill="none" stroke="#3ec71f" stroke-width="1.8" stroke-linecap="round"/><path d="M1181,567.5 C1209,567.5 1203,532.6 1231,532.6" fill="none" stroke="#3ec71f" stroke-width="1.8" stroke-linecap="round"/><path d="M1181,567.5 C1209,567.5 1203,552.3 1231,552.3" fill="none" stroke="#3ec71f" stroke-width="1.8" stroke-linecap="round"/><path d="M1181,567.5 C1209,567.5 1203,572.5 1231,572.5" fill="none" stroke="#3ec71f" stroke-width="1.8" stroke-linecap="round"/><path d="M601,858.7 C629,858.7 620,766.5 648,766.5" fill="none" stroke="#b51a1a" stroke-width="1.8" stroke-linecap="round"/><path d="M934,744.8 C956,744.8 950,764.4 972,764.4" fill="none" stroke="#b51a1a" stroke-width="1.8" stroke-linecap="round"/><path d="M934,885 C960,885 958,905.4 984,905.4" fill="none" stroke="#b51a1a" stroke-width="1.8" stroke-linecap="round"/><path d="M597,805 C614,805 618,809 606,814 L500,851 C488,856 498,858.7 509,858.7" fill="none" stroke="#b51a1a" stroke-width="1.8"/></svg>
<div class="a" style="left:293px;top:460px;width:44px;height:92px;background:#1d1d1d;border:1px solid #0c0c0c;border-left:none;border-radius:0 5px 5px 0;overflow:hidden;box-shadow:1px 2px 3px rgba(0,0,0,0.45)"><div class="a" style="left:0;top:0;width:100%;height:25px;background:linear-gradient(90deg,#2f5066,#2a4050 60%,#262a2e)"></div></div>
<div class="a" style="left:293px;top:440px;width:0;height:0"></div>
<div class="t" style="left:293px;top:475.8px;font-size:8px;color:rgba(200,210,220,0.55);font-style:italic;">ment</div>
<div class="a" style="left:543px;top:243px;width:124px;height:82px;background:rgba(30,30,30,0.9);border:1px solid #0c0c0c;border-radius:5px;box-shadow:1px 2px 3px rgba(0,0,0,0.45);overflow:hidden"><div class="a" style="left:0;top:0;width:100%;height:15px;background:linear-gradient(90deg,#a3141c 0%,#8c1419 45%,#4a1a1c 80%,#2a2222 100%)"></div><div class="a" style="left:0;top:0;width:100%;height:15px;background:linear-gradient(180deg,rgba(255,255,255,0.10),rgba(255,255,255,0) 45%,rgba(0,0,0,0.18))"></div></div>
<div class="t" style="left:563px;top:245.6px;font-size:9.5px;color:#eeeeee;font-weight:bold;transform:scaleX(0.85);transform-origin:left">InputAction Fire Gun</div>
<svg style="left:548px;top:245px" width="12" height="12"><path d="M6 0.5L11.5 6L6 11.5L0.5 6Z" fill="none" stroke="#fff" stroke-width="1.6"/><path d="M3.5 6L6 3.5V8.5Z" fill="#fff"/></svg>
<div class="t" style="right:1267px;top:267.4px;font-size:7.9px;color:#e4e4e4;">Pressed</div>
<div class="t" style="right:1267px;top:287.9px;font-size:7.9px;color:#e4e4e4;">Released</div>
<div class="t" style="right:1267px;top:309.4px;font-size:7.9px;color:#e4e4e4;">Key</div>
<div class="a" style="left:802px;top:242.5px;width:245px;height:168px;background:rgba(30,30,30,0.9);border:1px solid #0c0c0c;border-radius:5px;box-shadow:1px 2px 3px rgba(0,0,0,0.45);overflow:hidden"><div class="a" style="left:0;top:0;width:100%;height:15.5px;background:linear-gradient(90deg,#6a8aa0 0%,#4f7088 45%,#34495a 80%,#262a2e 100%)"></div><div class="a" style="left:0;top:0;width:100%;height:15.5px;background:linear-gradient(180deg,rgba(255,255,255,0.10),rgba(255,255,255,0) 45%,rgba(0,0,0,0.18))"></div></div>
<div class="t" style="left:822px;top:245.3px;font-size:9.5px;color:#eeeeee;font-weight:bold;transform:scaleX(0.85);transform-origin:left">SpawnActor BP Tank Shell</div>
<svg style="left:807px;top:244.5px" width="12" height="12"><circle cx="6" cy="5" r="4" fill="none" stroke="#dde" stroke-width="1.4"/><path d="M2 11h8" stroke="#dde" stroke-width="1.4"/><path d="M8 1l2 2" stroke="#dde" stroke-width="1.2"/></svg>
<div class="t" style="left:825px;top:287.4px;font-size:7.9px;color:#e4e4e4;">Class</div>
<div class="a" style="left:829px;top:297px;width:61px;height:16px;background:#2a2a2a;border-radius:2px"></div>
<div class="t" style="left:832px;top:301.1px;font-size:7.5px;color:#6a6a6a;">BP Tank Shell</div>
<svg style="left:876px;top:302px" width="8" height="6"><path d="M1 1l3 3l3-3" stroke="#8a8a8a" stroke-width="1.2" fill="none"/></svg>
<svg style="left:893px;top:299px" width="26" height="12"><circle cx="5.5" cy="5.5" r="4.5" fill="none" stroke="#4a4a4a" stroke-width="1"/><circle cx="18" cy="5" r="3.5" fill="none" stroke="#4a4a4a" stroke-width="1.1"/><path d="M20.5 7.5l3 3" stroke="#4a4a4a" stroke-width="1.2"/></svg>
<div class="t" style="right:888px;top:287.4px;font-size:7.9px;color:#e4e4e4;">Return Value</div>
<div class="t" style="left:825px;top:323.6px;font-size:7.9px;color:#e4e4e4;">Spawn Transform</div>
<div class="t" style="left:825px;top:343.2px;font-size:7.9px;color:#e4e4e4;">Collision Handling Override</div>
<div class="a" style="left:828px;top:352px;width:131px;height:18px;background:#121212;border-radius:2px;border:1px solid #2a2a2a"></div>
<div class="t" style="left:836px;top:357.3px;font-size:7.2px;color:#d8d8d8;">Always Spawn, Ignore Collisions</div>
<svg style="left:941px;top:358px" width="9" height="6"><path d="M1 1l3.5 3.5l3.5-3.5" stroke="#d0d0d0" stroke-width="1.3" fill="none"/></svg>
<div class="t" style="left:825px;top:382.6px;font-size:7.9px;color:#e4e4e4;">Instigator</div>
<svg style="left:920px;top:400px" width="10" height="7"><path d="M1 1l4 4l4-4" stroke="#e0e0e0" stroke-width="1.5" fill="none"/></svg>
<div class="a" style="left:1180.5px;top:231.5px;width:155px;height:139px;background:rgba(30,30,30,0.9);border:1px solid #0c0c0c;border-radius:5px;box-shadow:1px 2px 3px rgba(0,0,0,0.45);overflow:hidden"><div class="a" style="left:0;top:0;width:100%;height:26.5px;background:linear-gradient(90deg,#5a86a6 0%,#3f6a8a 45%,#2b4556 80%,#25292d 100%)"></div><div class="a" style="left:0;top:0;width:100%;height:26.5px;background:linear-gradient(180deg,rgba(255,255,255,0.10),rgba(255,255,255,0) 45%,rgba(0,0,0,0.18))"></div></div>
<div class="t" style="left:1200px;top:235.3px;font-size:9.5px;color:#eeeeee;font-weight:bold;transform:scaleX(0.85);transform-origin:left">Add Torque in Radians</div>
<div class="t" style="left:1200px;top:247.8px;font-size:8.4px;color:rgba(185,200,190,0.45);font-style:italic;">Target is Primitive Component</div>
<div class="t" style="left:1187.5px;top:234.5px;font-size:12px;font-style:italic;font-family:'Liberation Serif';color:#c8d0d8">&#402;</div>
<div class="t" style="left:1203px;top:287.5px;font-size:7.9px;color:#e4e4e4;">Target</div>
<div class="t" style="left:1203px;top:307.5px;font-size:7.9px;color:#e4e4e4;">Torque</div>
<div class="t" style="left:1203px;top:329.4px;font-size:7.9px;color:#e4e4e4;">Bone Name</div>
<div class="a" style="left:1248px;top:327px;width:29px;height:13px;border:1px solid #c8c8c8;background:#1a1a1a"></div>
<div class="t" style="left:1251px;top:328.8px;font-size:9px;color:#d8d8d8;">root</div>
<div class="t" style="left:1203px;top:352.9px;font-size:7.9px;color:#e4e4e4;">Accel Change</div>
<div class="a" style="left:1256px;top:351px;width:11px;height:12px;background:#111;border:1px solid #333"></div>
<svg style="left:1257px;top:352px" width="10" height="10"><path d="M1.5 5l2.5 2.5l4.5-5" stroke="#2a8ae8" stroke-width="1.5" fill="none"/></svg>
<div class="a" style="left:521px;top:339.5px;width:244.5px;height:121.5px;background:rgba(30,30,30,0.9);border:1px solid #0c0c0c;border-radius:5px;box-shadow:1px 2px 3px rgba(0,0,0,0.45);overflow:hidden"><div class="a" style="left:0;top:0;width:100%;height:26.5px;background:linear-gradient(90deg,#659658 0%,#54834a 40%,#3a5a33 75%,#252b24 100%)"></div><div class="a" style="left:0;top:0;width:100%;height:26.5px;background:linear-gradient(180deg,rgba(255,255,255,0.10),rgba(255,255,255,0) 45%,rgba(0,0,0,0.18))"></div></div>
<div class="t" style="left:541px;top:343.3px;font-size:9.5px;color:#eeeeee;font-weight:bold;transform:scaleX(0.85);transform-origin:left">Get Socket Transform</div>
<div class="t" style="left:541px;top:355.8px;font-size:8.4px;color:rgba(185,200,190,0.45);font-style:italic;">Target is Scene Component</div>
<div class="t" style="left:528px;top:342.5px;font-size:12px;font-style:italic;font-family:'Liberation Serif';color:#c8d0d8">&#402;</div>
<div class="t" style="left:544px;top:373.6px;font-size:7.9px;color:#e4e4e4;">Target</div>
<div class="t" style="right:1170px;top:373.9px;font-size:7.9px;color:#e4e4e4;">Return Value</div>
<div class="t" style="left:544px;top:393.5px;font-size:7.9px;color:#e4e4e4;">In Socket Name</div>
<div class="a" style="left:547px;top:402px;width:80px;height:14px;border:1px solid #c8c8c8;background:#1a1a1a"></div>
<div class="t" style="left:550px;top:404.3px;font-size:9px;color:#d8d8d8;">bone_gunSocket</div>
<div class="t" style="left:544px;top:427.6px;font-size:7.9px;color:#e4e4e4;">Transform Space</div>
<div class="a" style="left:547px;top:436px;width:129px;height:18px;background:#121212;border:1px solid #2a2a2a;border-radius:2px"></div>
<div class="t" style="left:555px;top:441.3px;font-size:7.2px;color:#c8c8c8;">RTS World</div>
<svg style="left:658px;top:442px" width="9" height="6"><path d="M1 1l3.5 3.5l3.5-3.5" stroke="#d0d0d0" stroke-width="1.3" fill="none"/></svg>
<div class="a" style="left:921.4px;top:425.6px;width:144px;height:50px;background:rgba(30,30,30,0.9);border:1px solid #0c0c0c;border-radius:5px;box-shadow:1px 2px 3px rgba(0,0,0,0.45);overflow:hidden"><div class="a" style="left:0;top:0;width:100%;height:26.399999999999977px;background:linear-gradient(90deg,#659658 0%,#54834a 40%,#3a5a33 75%,#252b24 100%)"></div><div class="a" style="left:0;top:0;width:100%;height:26.399999999999977px;background:linear-gradient(180deg,rgba(255,255,255,0.10),rgba(255,255,255,0) 45%,rgba(0,0,0,0.18))"></div></div>
<div class="t" style="left:941px;top:429.4px;font-size:9.5px;color:#eeeeee;font-weight:bold;transform:scaleX(0.85);transform-origin:left">Get World Location</div>
<div class="t" style="left:941px;top:441.8px;font-size:8.4px;color:rgba(185,200,190,0.45);font-style:italic;">Target is Scene Component</div>
<div class="t" style="left:928.4px;top:428.6px;font-size:12px;font-style:italic;font-family:'Liberation Serif';color:#c8d0d8">&#402;</div>
<div class="t" style="left:943px;top:460.3px;font-size:7.9px;color:#e4e4e4;">Target</div>
<div class="t" style="right:870px;top:460.3px;font-size:7.9px;color:#e4e4e4;">Return Value</div>
<div class="a" style="left:921.4px;top:494.7px;width:144px;height:49.4px;background:rgba(30,30,30,0.9);border:1px solid #0c0c0c;border-radius:5px;box-shadow:1px 2px 3px rgba(0,0,0,0.45);overflow:hidden"><div class="a" style="left:0;top:0;width:100%;height:26.30000000000001px;background:linear-gradient(90deg,#659658 0%,#54834a 40%,#3a5a33 75%,#252b24 100%)"></div><div class="a" style="left:0;top:0;width:100%;height:26.30000000000001px;background:linear-gradient(180deg,rgba(255,255,255,0.10),rgba(255,255,255,0) 45%,rgba(0,0,0,0.18))"></div></div>
<div class="t" style="left:941px;top:498.4px;font-size:9.5px;color:#eeeeee;font-weight:bold;transform:scaleX(0.85);transform-origin:left">Get World Location</div>
<div class="t" style="left:941px;top:510.8px;font-size:8.4px;color:rgba(185,200,190,0.45);font-style:italic;">Target is Scene Component</div>
<div class="t" style="left:928.4px;top:497.7px;font-size:12px;font-style:italic;font-family:'Liberation Serif';color:#c8d0d8">&#402;</div>
<div class="t" style="left:943px;top:529.2px;font-size:7.9px;color:#e4e4e4;">Target</div>
<div class="t" style="right:870px;top:529.2px;font-size:7.9px;color:#e4e4e4;">Return Value</div>
<div class="a" style="left:402px;top:367px;width:88px;height:23px;border-radius:11.5px;border:1px solid #151515;background:radial-gradient(ellipse 65% 60% at 55% 5%,rgba(40,150,220,0.55),rgba(0,0,0,0) 100%),linear-gradient(180deg,rgba(90,90,90,0.9),rgba(70,70,70,0.9) 55%,rgba(54,54,54,0.9));box-shadow:1px 2px 3px rgba(0,0,0,0.45)"></div>
<div class="t" style="right:1447px;top:373.7px;font-size:8.2px;color:#e8e8e8;">Mesh</div>
<div class="a" style="left:1061px;top:289.6px;width:88.5px;height:23.6px;border-radius:11.8px;border:1px solid #151515;background:radial-gradient(ellipse 65% 60% at 55% 5%,rgba(40,150,220,0.55),rgba(0,0,0,0) 100%),linear-gradient(180deg,rgba(90,90,90,0.9),rgba(70,70,70,0.9) 55%,rgba(54,54,54,0.9));box-shadow:1px 2px 3px rgba(0,0,0,0.45)"></div>
<div class="t" style="right:788.5px;top:297.3px;font-size:8.2px;color:#e8e8e8;">Mesh</div>
<div class="a" style="left:813.5px;top:452px;width:88px;height:23.7px;border-radius:11.8px;border:1px solid #151515;background:radial-gradient(ellipse 65% 60% at 55% 5%,rgba(40,150,220,0.55),rgba(0,0,0,0) 100%),linear-gradient(180deg,rgba(90,90,90,0.9),rgba(70,70,70,0.9) 55%,rgba(54,54,54,0.9));box-shadow:1px 2px 3px rgba(0,0,0,0.45)"></div>
<div class="t" style="right:1035.5px;top:459.7px;font-size:8.2px;color:#e8e8e8;">Sphere</div>
<div class="a" style="left:813.5px;top:521px;width:88px;height:23px;border-radius:11.5px;border:1px solid #151515;background:radial-gradient(ellipse 65% 60% at 55% 5%,rgba(40,150,220,0.55),rgba(0,0,0,0) 100%),linear-gradient(180deg,rgba(90,90,90,0.9),rgba(70,70,70,0.9) 55%,rgba(54,54,54,0.9));box-shadow:1px 2px 3px rgba(0,0,0,0.45)"></div>
<div class="t" style="right:1035.5px;top:528.7px;font-size:8.2px;color:#e8e8e8;">Mesh</div>
<div class="a" style="left:1084px;top:502px;width:94.5px;height:42px;border-radius:7px;border:1px solid #1a1a1a;background:linear-gradient(180deg,rgba(74,74,74,0.85),rgba(58,58,58,0.85) 30%,rgba(51,51,51,0.85) 100%);box-shadow:1px 2px 3px rgba(0,0,0,0.45)"></div>
<div class="t" style="left:1130px;top:517.3px;font-size:11px;color:#cfcfcf;font-weight:bold;transform:translateX(-50%);">-</div>
<div class="t" style="left:1126px;top:532.6px;font-size:9.5px;color:#e0e0e0;">Add pin</div>
<div class="a" style="left:1223.5px;top:502px;width:94.7px;height:80.7px;border-radius:7px;border:1px solid #1a1a1a;background:linear-gradient(180deg,rgba(74,74,74,0.85),rgba(58,58,58,0.85) 30%,rgba(51,51,51,0.85) 100%);box-shadow:1px 2px 3px rgba(0,0,0,0.45)"></div>
<div class="t" style="left:1246px;top:528.5px;font-size:7.9px;color:#e4e4e4;">X</div>
<div class="t" style="left:1246px;top:548.2px;font-size:7.9px;color:#e4e4e4;">Y</div>
<div class="t" style="left:1246px;top:568.4px;font-size:7.9px;color:#e4e4e4;">Z</div>
<div class="t" style="left:1271px;top:536.8px;font-size:12px;color:#cfcfcf;transform:translateX(-50%);">&#247;</div>
<div class="t" style="left:1267px;top:552.1px;font-size:9.5px;color:#e0e0e0;">Add pin</div>
<div class="a" style="left:1104px;top:556px;width:88.7px;height:23px;border-radius:11.5px;border:1px solid #151515;background:radial-gradient(ellipse 65% 60% at 55% 5%,rgba(70,200,40,0.55),rgba(0,0,0,0) 100%),linear-gradient(180deg,rgba(90,90,90,0.9),rgba(70,70,70,0.9) 55%,rgba(54,54,54,0.9));box-shadow:1px 2px 3px rgba(0,0,0,0.45)"></div>
<div class="t" style="right:745.5px;top:563.2px;font-size:8.2px;color:#e8e8e8;">Tank Torque</div>
<div class="a" style="left:478.5px;top:684.7px;width:134px;height:82px;background:rgba(30,30,30,0.9);border:1px solid #0c0c0c;border-radius:5px;box-shadow:1px 2px 3px rgba(0,0,0,0.45);overflow:hidden"><div class="a" style="left:0;top:0;width:100%;height:16.299999999999955px;background:linear-gradient(90deg,#a3141c 0%,#8c1419 45%,#4a1a1c 80%,#2a2222 100%)"></div><div class="a" style="left:0;top:0;width:100%;height:16.299999999999955px;background:linear-gradient(180deg,rgba(255,255,255,0.10),rgba(255,255,255,0) 45%,rgba(0,0,0,0.18))"></div></div>
<div class="t" style="left:498px;top:687.9px;font-size:9.5px;color:#eeeeee;font-weight:bold;transform:scaleX(0.85);transform-origin:left">InputAction Open Door</div>
<svg style="left:483.5px;top:686.7px" width="12" height="12"><path d="M6 0.5L11.5 6L6 11.5L0.5 6Z" fill="none" stroke="#fff" stroke-width="1.6"/><path d="M3.5 6L6 3.5V8.5Z" fill="#fff"/></svg>
<div class="t" style="right:1322px;top:709.3px;font-size:7.9px;color:#e4e4e4;">Pressed</div>
<div class="t" style="right:1322px;top:730.4px;font-size:7.9px;color:#e4e4e4;">Released</div>
<div class="t" style="right:1323px;top:751.3px;font-size:7.9px;color:#e4e4e4;">Key</div>
<div class="a" style="left:381.7px;top:782.4px;width:87.6px;height:22.5px;border-radius:11.2px;border:1px solid #151515;background:radial-gradient(ellipse 65% 60% at 55% 5%,rgba(70,200,40,0.55),rgba(0,0,0,0) 100%),linear-gradient(180deg,rgba(90,90,90,0.9),rgba(70,70,70,0.9) 55%,rgba(54,54,54,0.9));box-shadow:1px 2px 3px rgba(0,0,0,0.45)"></div>
<div class="t" style="right:1468.5px;top:789.3px;font-size:8.2px;color:#e8e8e8;">Door Value</div>
<div class="a" style="left:489.3px;top:781.8px;width:117.3px;height:47.5px;border-radius:7px;border:1px solid #1a1a1a;background:linear-gradient(180deg,rgba(74,74,74,0.85),rgba(58,58,58,0.85) 30%,rgba(51,51,51,0.85) 100%);box-shadow:1px 2px 3px rgba(0,0,0,0.45)"></div>
<div class="a" style="left:514px;top:809px;width:20px;height:14px;border:1px solid #d0d0d0"></div>
<div class="t" style="left:524px;top:811.9px;font-size:7.9px;color:#d8d8d8;transform:translateX(-50%);">0.0</div>
<div class="t" style="left:547px;top:799.8px;font-size:12px;color:#cfcfcf;font-weight:bold;transform:translateX(-50%);">==</div>
<div class="a" style="left:499px;top:847px;width:113.4px;height:23.4px;border-radius:7px;border:1px solid #1a1a1a;background:linear-gradient(180deg,rgba(74,74,74,0.85),rgba(58,58,58,0.85) 30%,rgba(51,51,51,0.85) 100%);box-shadow:1px 2px 3px rgba(0,0,0,0.45)"></div>
<div class="t" style="left:556px;top:850.9px;font-size:15px;color:#b8b8b8;font-weight:bold;transform:translateX(-50%);">NOT</div>
<div class="a" style="left:640.2px;top:717.5px;width:120.3px;height:62px;background:rgba(30,30,30,0.9);border:1px solid #0c0c0c;border-radius:5px;box-shadow:1px 2px 3px rgba(0,0,0,0.45);overflow:hidden"><div class="a" style="left:0;top:0;width:100%;height:15.5px;background:linear-gradient(90deg,#9a9a9a 0%,#7a7a7a 45%,#4a4a4a 80%,#2c2c2c 100%)"></div><div class="a" style="left:0;top:0;width:100%;height:15.5px;background:linear-gradient(180deg,rgba(255,255,255,0.10),rgba(255,255,255,0) 45%,rgba(0,0,0,0.18))"></div></div>
<div class="t" style="left:660px;top:720.3px;font-size:9.5px;color:#eeeeee;font-weight:bold;transform:scaleX(0.85);transform-origin:left">Branch</div>
<svg style="left:646.2px;top:720.5px" width="11" height="11"><path d="M0 5.5h4M4 1.5v8M4 1.5h6M4 9.5h6" fill="none" stroke="#eee" stroke-width="1.6"/></svg>
<div class="t" style="right:1173px;top:741.4px;font-size:7.9px;color:#e4e4e4;">True</div>
<div class="t" style="left:663px;top:762.4px;font-size:7.9px;color:#e4e4e4;">Condition</div>
<div class="t" style="right:1173px;top:763.1px;font-size:7.9px;color:#e4e4e4;">False</div>
<div class="a" style="left:813.5px;top:706.8px;width:133px;height:52.5px;border-radius:8px;border:1px solid #1a1a1a;background:radial-gradient(ellipse 65% 45% at 50% 0%,rgba(170,45,45,0.55),rgba(0,0,0,0)),linear-gradient(180deg,rgba(74,74,74,0.85),rgba(58,58,58,0.85) 40%,rgba(51,51,51,0.85));box-shadow:1px 2px 3px rgba(0,0,0,0.45)"></div>
<div class="t" style="left:879.5px;top:711.9px;font-size:9.5px;color:#e8e8e8;transform:translateX(-50%);">SET</div>
<div class="t" style="left:837.0px;top:742.3px;font-size:7.9px;color:#e4e4e4;">Is Door Open</div>
<div class="a" style="left:888.0px;top:740.9px;width:10px;height:11px;background:#111;border:1px solid #2a2a2a"></div>
<div class="a" style="left:813.5px;top:846.5px;width:133px;height:53.7px;border-radius:8px;border:1px solid #1a1a1a;background:radial-gradient(ellipse 65% 45% at 50% 0%,rgba(170,45,45,0.55),rgba(0,0,0,0)),linear-gradient(180deg,rgba(74,74,74,0.85),rgba(58,58,58,0.85) 40%,rgba(51,51,51,0.85));box-shadow:1px 2px 3px rgba(0,0,0,0.45)"></div>
<div class="t" style="left:879.5px;top:851.6px;font-size:9.5px;color:#e8e8e8;transform:translateX(-50%);">SET</div>
<div class="t" style="left:837.0px;top:882.6px;font-size:7.9px;color:#e4e4e4;">Is Door Open</div>
<div class="a" style="left:888.0px;top:881.2px;width:10px;height:11px;background:#111;border:1px solid #2a2a2a"></div>
<svg style="left:888.5px;top:881.7px" width="10" height="10"><path d="M1.5 5l2.5 2.5l4.5-5" stroke="#2a8ae8" stroke-width="1.5" fill="none"/></svg>
<div class="a" style="left:791.8px;top:781.7px;width:149.7px;height:24.6px;border-radius:12.3px;border:1px solid #151515;background:radial-gradient(ellipse 65% 60% at 55% 5%,rgba(40,150,220,0.55),rgba(0,0,0,0) 100%),linear-gradient(180deg,rgba(90,90,90,0.9),rgba(70,70,70,0.9) 55%,rgba(54,54,54,0.9));box-shadow:1px 2px 3px rgba(0,0,0,0.45)"></div>
<div class="t" style="right:997.5px;top:789.2px;font-size:8.2px;color:#e8e8e8;">Vehicle Movement Component</div>
<div class="a" style="left:964.2px;top:684.5px;width:215.5px;height:92px;background:rgba(30,30,30,0.9);border:1px solid #0c0c0c;border-radius:5px;box-shadow:1px 2px 3px rgba(0,0,0,0.45);overflow:hidden"><div class="a" style="left:0;top:0;width:100%;height:27.899999999999977px;background:linear-gradient(90deg,#5a86a6 0%,#3f6a8a 45%,#2b4556 80%,#25292d 100%)"></div><div class="a" style="left:0;top:0;width:100%;height:27.899999999999977px;background:linear-gradient(180deg,rgba(255,255,255,0.10),rgba(255,255,255,0) 45%,rgba(0,0,0,0.18))"></div></div>
<div class="t" style="left:984px;top:688.8px;font-size:9.5px;color:#eeeeee;font-weight:bold;transform:scaleX(0.85);transform-origin:left">Set Handbrake Input</div>
<div class="t" style="left:984px;top:701.9px;font-size:8.4px;color:rgba(185,200,190,0.45);font-style:italic;">Target is Chaos Vehicle Movement Component</div>
<div class="t" style="left:971.2px;top:687.5px;font-size:12px;font-style:italic;font-family:'Liberation Serif';color:#c8d0d8">&#402;</div>
<div class="t" style="left:987px;top:740.9px;font-size:7.9px;color:#e4e4e4;">Target</div>
<div class="t" style="left:987px;top:760.3px;font-size:7.9px;color:#e4e4e4;">New Handbrake</div>
<div class="a" style="left:975.8px;top:825.4px;width:213.6px;height:90.8px;background:rgba(30,30,30,0.9);border:1px solid #0c0c0c;border-radius:5px;box-shadow:1px 2px 3px rgba(0,0,0,0.45);overflow:hidden"><div class="a" style="left:0;top:0;width:100%;height:26.200000000000045px;background:linear-gradient(90deg,#5a86a6 0%,#3f6a8a 45%,#2b4556 80%,#25292d 100%)"></div><div class="a" style="left:0;top:0;width:100%;height:26.200000000000045px;background:linear-gradient(180deg,rgba(255,255,255,0.10),rgba(255,255,255,0) 45%,rgba(0,0,0,0.18))"></div></div>
<div class="t" style="left:995.7px;top:829.1px;font-size:9.5px;color:#eeeeee;font-weight:bold;transform:scaleX(0.85);transform-origin:left">Set Handbrake Input</div>
<div class="t" style="left:995.7px;top:841.5px;font-size:8.4px;color:rgba(185,200,190,0.45);font-style:italic;">Target is Chaos Vehicle Movement Component</div>
<div class="t" style="left:982.8px;top:828.4px;font-size:12px;font-style:italic;font-family:'Liberation Serif';color:#c8d0d8">&#402;</div>
<div class="t" style="left:998px;top:880.9px;font-size:7.9px;color:#e4e4e4;">Target</div>
<div class="t" style="left:998px;top:901.3px;font-size:7.9px;color:#e4e4e4;">New Handbrake</div>
<svg style="left:0;top:0" width="1913" height="1074"><path d="M320,495 L324.5,495 L328.5,500 L324.5,505 L320,505 Z" fill="none" stroke="#fff" stroke-width="1.2"/><path d="M651,266.5 L655.5,266.5 L659.5,271.5 L655.5,276.5 L651,276.5 Z" fill="#fff"/><path d="M651,287 L655.5,287 L659.5,292 L655.5,297 L651,297 Z" fill="none" stroke="#fff" stroke-width="1.2"/><circle cx="653.5" cy="313.5" r="3.6" fill="none" stroke="#1a6fd0" stroke-width="1.5"/><path d="M658.5,311.3 L660.7,313.5 L658.5,315.7z" fill="#1a6fd0"/><path d="M811,266.5 L815.5,266.5 L819.5,271.5 L815.5,276.5 L811,276.5 Z" fill="#fff"/><path d="M1031,266.5 L1035.5,266.5 L1039.5,271.5 L1035.5,276.5 L1031,276.5 Z" fill="#fff"/><circle cx="815" cy="300" r="4.3" fill="#4a2a9a"/><path d="M820,297.8 L822.2,300 L820,302.2z" fill="#4a2a9a"/><circle cx="1033.5" cy="291.5" r="3.6" fill="none" stroke="#1ca3e6" stroke-width="1.5"/><path d="M1038.5,289.3 L1040.7,291.5 L1038.5,293.7z" fill="#1ca3e6"/><circle cx="815" cy="327.7" r="4.3" fill="#f07b1a"/><path d="M820,325.5 L822.2,327.7 L820,329.9z" fill="#f07b1a"/><circle cx="815" cy="357" r="3.6" fill="none" stroke="#1f7a6a" stroke-width="1.5"/><path d="M820,354.8 L822.2,357 L820,359.2z" fill="#1f7a6a"/><circle cx="815" cy="386.7" r="3.6" fill="none" stroke="#1ca3e6" stroke-width="1.5"/><path d="M820,384.5 L822.2,386.7 L820,388.9z" fill="#1ca3e6"/><path d="M1189,265 L1193.5,265 L1197.5,270 L1193.5,275 L1189,275 Z" fill="#fff"/><path d="M1318,265 L1322.5,265 L1326.5,270 L1322.5,275 L1318,275 Z" fill="none" stroke="#fff" stroke-width="1.2"/><circle cx="1193.4" cy="291.6" r="4.3" fill="#1ca3e6"/><path d="M1198.4,289.40000000000003 L1200.6000000000001,291.6 L1198.4,293.8z" fill="#1ca3e6"/><circle cx="1193.4" cy="311.6" r="4.3" fill="#f1c230"/><path d="M1198.4,309.40000000000003 L1200.6000000000001,311.6 L1198.4,313.8z" fill="#f1c230"/><circle cx="1193.4" cy="333.5" r="3.6" fill="none" stroke="#9a5ad0" stroke-width="1.5"/><path d="M1198.4,331.3 L1200.6000000000001,333.5 L1198.4,335.7z" fill="#9a5ad0"/><circle cx="1193.4" cy="357" r="4.3" fill="#5a0a0a"/><path d="M1198.4,354.8 L1200.6000000000001,357 L1198.4,359.2z" fill="#5a0a0a"/><circle cx="535" cy="377.7" r="4.3" fill="#1ca3e6"/><path d="M540,375.5 L542.2,377.7 L540,379.9z" fill="#1ca3e6"/><circle cx="751" cy="378" r="4.3" fill="#f07b1a"/><path d="M756,375.8 L758.2,378 L756,380.2z" fill="#f07b1a"/><circle cx="535" cy="404.5" r="3.6" fill="none" stroke="#9a5ad0" stroke-width="1.5"/><path d="M540,402.3 L542.2,404.5 L540,406.7z" fill="#9a5ad0"/><circle cx="535" cy="440.3" r="3.6" fill="none" stroke="#1f7a6a" stroke-width="1.5"/><path d="M540,438.1 L542.2,440.3 L540,442.5z" fill="#1f7a6a"/><circle cx="933" cy="464.4" r="4.3" fill="#1ca3e6"/><path d="M938,462.2 L940.2,464.4 L938,466.59999999999997z" fill="#1ca3e6"/><circle cx="1051.5" cy="464.4" r="4.3" fill="#f1c230"/><path d="M1056.5,462.2 L1058.7,464.4 L1056.5,466.59999999999997z" fill="#f1c230"/><circle cx="933" cy="533.3" r="4.3" fill="#1ca3e6"/><path d="M938,531.0999999999999 L940.2,533.3 L938,535.5z" fill="#1ca3e6"/><circle cx="1051.5" cy="533.3" r="4.3" fill="#f1c230"/><path d="M1056.5,531.0999999999999 L1058.7,533.3 L1056.5,535.5z" fill="#f1c230"/><circle cx="475" cy="378" r="4.3" fill="#1ca3e6"/><path d="M480,375.8 L482.2,378 L480,380.2z" fill="#1ca3e6"/><circle cx="1133.5" cy="301.6" r="4.3" fill="#1ca3e6"/><path d="M1138.5,299.40000000000003 L1140.7,301.6 L1138.5,303.8z" fill="#1ca3e6"/><circle cx="886.5" cy="464" r="4.3" fill="#1ca3e6"/><path d="M891.5,461.8 L893.7,464 L891.5,466.2z" fill="#1ca3e6"/><circle cx="886.5" cy="533" r="4.3" fill="#1ca3e6"/><path d="M891.5,530.8 L893.7,533 L891.5,535.2z" fill="#1ca3e6"/><circle cx="1096.6" cy="512.3" r="4.2" fill="#707070" stroke="#f1c230" stroke-width="1.5"/><circle cx="1096.6" cy="533" r="4.2" fill="#707070" stroke="#f1c230" stroke-width="1.5"/><circle cx="1164.5" cy="512.3" r="4.2" fill="#707070" stroke="#f1c230" stroke-width="1.5"/><circle cx="1166" cy="537.5" r="4.5" fill="none" stroke="#e0e0e0" stroke-width="1.1"/><path d="M1166 535v5M1163.5 537.5h5" stroke="#e0e0e0" stroke-width="1.1"/><circle cx="1236.8" cy="512.3" r="4.2" fill="#707070" stroke="#f1c230" stroke-width="1.5"/><circle cx="1305" cy="531.3" r="4.2" fill="#707070" stroke="#f1c230" stroke-width="1.5"/><circle cx="1235.6" cy="532.6" r="4.3" fill="#3ec71f"/><path d="M1240.6,530.4 L1242.8,532.6 L1240.6,534.8000000000001z" fill="#3ec71f"/><circle cx="1235.6" cy="552.3" r="4.3" fill="#3ec71f"/><path d="M1240.6,550.0999999999999 L1242.8,552.3 L1240.6,554.5z" fill="#3ec71f"/><circle cx="1235.6" cy="572.5" r="4.3" fill="#3ec71f"/><path d="M1240.6,570.3 L1242.8,572.5 L1240.6,574.7z" fill="#3ec71f"/><circle cx="1307" cy="557" r="4.5" fill="none" stroke="#e0e0e0" stroke-width="1.1"/><path d="M1307 554.5v5M1304.5 557h5" stroke="#e0e0e0" stroke-width="1.1"/><circle cx="1176.5" cy="567.5" r="4.3" fill="#3ec71f"/><path d="M1181.5,565.3 L1183.7,567.5 L1181.5,569.7z" fill="#3ec71f"/><circle cx="1181.6" cy="453" r="4.6" fill="#f1c230"/><circle cx="1311.7" cy="453" r="4.6" fill="#f1c230"/><path d="M595,708.4 L599.5,708.4 L603.5,713.4 L599.5,718.4 L595,718.4 Z" fill="#fff"/><path d="M595,729.5 L599.5,729.5 L603.5,734.5 L599.5,739.5 L595,739.5 Z" fill="none" stroke="#fff" stroke-width="1.2"/><circle cx="597" cy="755.4" r="3.6" fill="none" stroke="#1a6fd0" stroke-width="1.5"/><path d="M602,753.1999999999999 L604.2,755.4 L602,757.6z" fill="#1a6fd0"/><circle cx="453.5" cy="793.6" r="4.3" fill="#3ec71f"/><path d="M458.5,791.4 L460.7,793.6 L458.5,795.8000000000001z" fill="#3ec71f"/><circle cx="502.5" cy="793.6" r="4.2" fill="#707070" stroke="#3ec71f" stroke-width="1.5"/><circle cx="502.5" cy="815.6" r="4.2" fill="#707070" stroke="#3ec71f" stroke-width="1.5"/><circle cx="592.5" cy="805" r="4.2" fill="#707070" stroke="#c02020" stroke-width="1.5"/><circle cx="513.6" cy="858.7" r="4.3" fill="#b51a1a"/><circle cx="596.8" cy="858.7" r="4.3" fill="#b51a1a"/><path d="M650,740.5 L654.5,740.5 L658.5,745.5 L654.5,750.5 L650,750.5 Z" fill="#fff"/><path d="M744,740.5 L748.5,740.5 L752.5,745.5 L748.5,750.5 L744,750.5 Z" fill="#fff"/><circle cx="652.6" cy="766.5" r="4.3" fill="#b51a1a"/><path d="M744,762.2 L748.5,762.2 L752.5,767.2 L748.5,772.2 L744,772.2 Z" fill="#fff"/><path d="M825.0,719 L829.5,719 L833.5,724 L829.5,729 L825.0,729 Z" fill="#fff"/><path d="M931.0,719 L935.5,719 L939.5,724 L935.5,729 L931.0,729 Z" fill="#fff"/><circle cx="827.0" cy="746.4" r="4.3" fill="#6a1010"/><path d="M832.0,744.1999999999999 L834.2,746.4 L832.0,748.6z" fill="#6a1010"/><circle cx="929.7" cy="744.8" r="4.3" fill="#b51a1a"/><path d="M825.0,859.4 L829.5,859.4 L833.5,864.4 L829.5,869.4 L825.0,869.4 Z" fill="#fff"/><path d="M931.0,859.4 L935.5,859.4 L939.5,864.4 L935.5,869.4 L931.0,869.4 Z" fill="#fff"/><circle cx="827.0" cy="886.7" r="4.3" fill="#6a1010"/><path d="M832.0,884.5 L834.2,886.7 L832.0,888.9000000000001z" fill="#6a1010"/><circle cx="929.7" cy="885.1" r="4.3" fill="#b51a1a"/><circle cx="924.5" cy="793.5" r="4.3" fill="#1ca3e6"/><path d="M929.5,791.3 L931.7,793.5 L929.5,795.7z" fill="#1ca3e6"/><path d="M973,719.5 L977.5,719.5 L981.5,724.5 L977.5,729.5 L973,729.5 Z" fill="#fff"/><path d="M1162,719.5 L1166.5,719.5 L1170.5,724.5 L1166.5,729.5 L1162,729.5 Z" fill="none" stroke="#fff" stroke-width="1.2"/><circle cx="976.8" cy="745" r="4.3" fill="#1ca3e6"/><path d="M981.8,742.8 L984.0,745 L981.8,747.2z" fill="#1ca3e6"/><circle cx="976.8" cy="764.4" r="4.3" fill="#b51a1a"/><path d="M981.8,762.1999999999999 L984.0,764.4 L981.8,766.6z" fill="#b51a1a"/><path d="M985,859.4 L989.5,859.4 L993.5,864.4 L989.5,869.4 L985,869.4 Z" fill="#fff"/><path d="M1173,859.4 L1177.5,859.4 L1181.5,864.4 L1177.5,869.4 L1173,869.4 Z" fill="none" stroke="#fff" stroke-width="1.2"/><circle cx="988" cy="885" r="4.3" fill="#1ca3e6"/><path d="M993,882.8 L995.2,885 L993,887.2z" fill="#1ca3e6"/><circle cx="988" cy="905.4" r="4.3" fill="#b51a1a"/><path d="M993,903.1999999999999 L995.2,905.4 L993,907.6z" fill="#b51a1a"/></svg><!-- ============ DETAILS ============ -->
<div class="a" style="left:1434px;top:100px;width:479px;height:898px;background:#151515"></div>
<div class="a" style="left:1437px;top:104px;width:160px;height:25px;background:#242424;border-radius:4px 4px 0 0"></div>
<div class="a" style="left:1437px;top:128px;width:476px;height:870px;background:#242424"></div>
<svg style="left:1442px;top:107px" width="18" height="17"><path d="M4 12L13 2l3 3L6 15H3z" fill="#c8c8c8"/><path d="M1 16h16M1 9h5M1 12h3" stroke="#c8c8c8" stroke-width="1"/></svg>
<div class="t" style="left:1464px;top:109px;font-size:13px;color:#c8c8c8">Details</div>
<svg style="left:1574px;top:111px" width="10" height="10"><path d="M1.5 1.5L8.5 8.5M8.5 1.5L1.5 8.5" stroke="#c8c8c8" stroke-width="1.6"/></svg>
<div class="a" style="left:1446px;top:137px;width:412px;height:21px;background:#0f0f0f;border-radius:10px"></div>
<svg style="left:1450px;top:139px" width="16" height="16"><circle cx="6.5" cy="6.5" r="5" fill="none" stroke="#c8c8c8" stroke-width="1.5"/><path d="M10 10l4.5 4.5" stroke="#c8c8c8" stroke-width="1.6"/></svg>
<div class="t" style="left:1474px;top:140px;font-size:13px;color:#5c5c5c">Search</div>
<svg style="left:1871px;top:140px" width="16" height="15"><rect x="1" y="1" width="14" height="13" fill="none" stroke="#c8c8c8" stroke-width="1.6"/><path d="M1 5h14M1 8.5h14M1 11.5h14M6 5v9" stroke="#c8c8c8" stroke-width="1.3"/></svg>
<svg style="left:1895px;top:139px" width="16" height="16"><g transform="translate(8 8)"><circle r="4.5" fill="none" stroke="#c8c8c8" stroke-width="2"/><circle r="2" fill="none" stroke="#c8c8c8" stroke-width="1"/><g stroke="#c8c8c8" stroke-width="2"><path d="M0 -8V-6M0 6V8M-8 0H-6M6 0H8M-5.6 -5.6L-4.2 -4.2M4.2 4.2L5.6 5.6M-5.6 5.6L-4.2 4.2M4.2 -4.2L5.6 -5.6"/></g></g></svg>
<div class="a" style="left:1899px;top:167px;width:14px;height:831px;background:#1b1b1b"></div>
<div class="a" style="left:1903px;top:169px;width:8px;height:109px;background:#3c3c3c;border-radius:4px"></div>
<div class="a" style="left:1437px;top:168px;width:462px;height:25px;background:#2e2e2e"></div>
<svg style="left:1442px;top:178.0px" width="10" height="7"><path d="M0 0h9l-4.5 6z" fill="#6a6a6a"/></svg>
<div class="t" style="left:1459px;top:174.5px;font-size:12px;font-weight:bold;color:#c8c8c8;transform:scaleX(0.87);transform-origin:left">Transform</div>
<div class="a" style="left:1437px;top:194px;width:462px;height:26px;background:#1f1f1f"></div>
<div class="a" style="left:1626px;top:194px;width:1px;height:26px;background:#151515"></div>
<div class="a" style="left:1876px;top:194px;width:1px;height:26px;background:#191919"></div>
<div class="a" style="left:1460px;top:197px;width:83px;height:20px;background:#0f0f0f;border-radius:3px"></div>
<div class="t" style="left:1467px;top:200.5px;font-size:12px;color:#d8d8d8;transform:scaleX(0.935);transform-origin:left">Scale</div>
<svg style="left:1526px;top:204.0px" width="10" height="7"><path d="M1 1l4 4l4 -4" fill="none" stroke="#d0d0d0" stroke-width="1.5"/></svg>
<svg style="left:1552px;top:198px" width="16" height="18"><path d="M4 8V5a4 4 0 0 1 8 0" fill="none" stroke="#c8c8c8" stroke-width="1.7"/><rect x="1" y="8" width="11" height="8" fill="#c8c8c8"/></svg>
<div class="a" style="left:1640px;top:197px;width:75px;height:20px;background:#0f0f0f;border-radius:3px"></div>
<div class="t" style="left:1647px;top:200.5px;font-size:12px;color:#e0e0e0">1.0</div>
<div class="a" style="left:1642px;top:201px;width:2px;height:12px;background:#c8281e"></div>
<div class="a" style="left:1718px;top:197px;width:76px;height:20px;background:#0f0f0f;border-radius:3px"></div>
<div class="t" style="left:1725px;top:200.5px;font-size:12px;color:#e0e0e0">1.0</div>
<div class="a" style="left:1720px;top:201px;width:2px;height:12px;background:#6ab42a"></div>
<div class="a" style="left:1797px;top:197px;width:76px;height:20px;background:#0f0f0f;border-radius:3px"></div>
<div class="t" style="left:1804px;top:200.5px;font-size:12px;color:#e0e0e0">1.0</div>
<div class="a" style="left:1799px;top:201px;width:2px;height:12px;background:#2f6fd0"></div>
<div class="a" style="left:1437px;top:221px;width:462px;height:25px;background:#2e2e2e"></div>
<svg style="left:1442px;top:231.0px" width="10" height="7"><path d="M0 0h9l-4.5 6z" fill="#6a6a6a"/></svg>
<div class="t" style="left:1459px;top:227.5px;font-size:12px;font-weight:bold;color:#c8c8c8;transform:scaleX(0.87);transform-origin:left">Animation</div>
<div class="a" style="left:1437px;top:247px;width:462px;height:26px;background:#1f1f1f"></div>
<div class="a" style="left:1626px;top:247px;width:1px;height:26px;background:#151515"></div>
<div class="a" style="left:1876px;top:247px;width:1px;height:26px;background:#191919"></div>
<div class="t" style="left:1459px;top:254.0px;font-size:12px;color:#c0c0c0;transform:scaleX(0.935);transform-origin:left">Animation Mode</div>
<div class="a" style="left:1640px;top:251px;width:155px;height:20px;background:#0f0f0f;border-radius:3px"></div>
<div class="t" style="left:1647px;top:254.5px;font-size:12px;color:#d8d8d8;transform:scaleX(0.935);transform-origin:left">Use Animation Blueprint</div>
<svg style="left:1778px;top:258.0px" width="10" height="7"><path d="M1 1l4 4l4 -4" fill="none" stroke="#d0d0d0" stroke-width="1.5"/></svg>
<div class="a" style="left:1437px;top:274px;width:462px;height:26px;background:#1f1f1f"></div>
<div class="a" style="left:1626px;top:274px;width:1px;height:26px;background:#151515"></div>
<div class="a" style="left:1876px;top:274px;width:1px;height:26px;background:#191919"></div>
<div class="t" style="left:1459px;top:281.0px;font-size:12px;color:#c0c0c0;transform:scaleX(0.935);transform-origin:left">Anim Class</div>
<div class="a" style="left:1640px;top:277px;width:181px;height:21px;background:#0f0f0f;border-radius:3px"></div>
<div class="t" style="left:1647px;top:281.0px;font-size:12px;color:#d8d8d8;transform:scaleX(0.935);transform-origin:left">SK_LAVIFV_Skeleton1_AnimB</div>
<svg style="left:1804px;top:284.5px" width="10" height="7"><path d="M1 1l4 4l4 -4" fill="none" stroke="#d0d0d0" stroke-width="1.5"/></svg>
<svg style="left:1827px;top:280px" width="16" height="16"><path d="M13 3.5A6.5 6.5 0 1 0 13 12.5" fill="none" stroke="#c8c8c8" stroke-width="1.6"/><path d="M14 8H5M8 4.5L4.5 8L8 11.5" fill="none" stroke="#c8c8c8" stroke-width="1.6"/></svg>
<svg style="left:1853px;top:280px" width="17" height="17"><path d="M1 1h5l2 2h4v4H1z" fill="#c0c0c0"/><path d="M1 4h11v10H1z" fill="#c0c0c0"/><circle cx="11.5" cy="11" r="3.6" fill="#1f1f1f" stroke="#c0c0c0" stroke-width="1.3"/><path d="M9 13.5l-2.5 2.5" stroke="#c0c0c0" stroke-width="1.4"/></svg>
<div class="a" style="left:1437px;top:301px;width:462px;height:26px;background:#1f1f1f"></div>
<div class="a" style="left:1626px;top:301px;width:1px;height:26px;background:#151515"></div>
<div class="a" style="left:1876px;top:301px;width:1px;height:26px;background:#191919"></div>
<div class="t" style="left:1459px;top:308.0px;font-size:12px;color:#c0c0c0;transform:scaleX(0.935);transform-origin:left">Disable Post Process Blueprint</div>
<div class="a" style="left:1640px;top:307px;width:16px;height:16px;background:#111;border-radius:2px;border:1px solid #1a1a1a"></div>
<div class="a" style="left:1437px;top:328px;width:462px;height:26px;background:#2e2e2e"></div>
<svg style="left:1444px;top:336.5px" width="7" height="11"><path d="M0 0v10l6 -5z" fill="#6a6a6a"/></svg>
<div class="t" style="left:1459px;top:335.0px;font-size:12px;font-weight:normal;color:#c8c8c8;transform:scaleX(0.935);transform-origin:left">Advanced</div>
<div class="a" style="left:1437px;top:355px;width:462px;height:26px;background:#2e2e2e"></div>
<svg style="left:1442px;top:365.5px" width="10" height="7"><path d="M0 0h9l-4.5 6z" fill="#6a6a6a"/></svg>
<div class="t" style="left:1459px;top:362.0px;font-size:12px;font-weight:bold;color:#c8c8c8;transform:scaleX(0.87);transform-origin:left">Mesh</div>
<div class="a" style="left:1437px;top:382px;width:462px;height:58px;background:#1f1f1f"></div>
<div class="a" style="left:1626px;top:382px;width:1px;height:58px;background:#151515"></div>
<div class="a" style="left:1876px;top:382px;width:1px;height:58px;background:#191919"></div>
<div class="t" style="left:1459px;top:405.0px;font-size:12px;color:#c0c0c0;transform:scaleX(0.935);transform-origin:left">Skeletal Mesh Asset</div>
<div class="a" style="left:1640px;top:388px;width:48px;height:48px;background:#0c0c0c;border-radius:2px"></div>
<svg style="left:1640px;top:396px" width="49" height="30"><path d="M1 9l5-4l12-1l3-2l7 1l4 3l8 2l7 5l1 4l-4 3l-30 0l-10-5z" fill="#b8b898"/><path d="M4 11l14-2l10 1l12 2l6 4" stroke="#e0e0c8" stroke-width="1.6" fill="none"/><path d="M8 14h30M14 8v8M26 7v9" stroke="#6a6a55" stroke-width="0.9"/><g fill="#9a9a88"><circle cx="11" cy="21" r="3.4"/><circle cx="19" cy="22" r="3.4"/><circle cx="27" cy="22.5" r="3.4"/><circle cx="35" cy="22" r="3.4"/></g><g fill="#555548"><circle cx="11" cy="21" r="1.2"/><circle cx="19" cy="22" r="1.2"/><circle cx="27" cy="22.5" r="1.2"/><circle cx="35" cy="22" r="1.2"/></g></svg>
<div class="a" style="left:1640px;top:433px;width:48px;height:3px;background:#e8a0f0;border-radius:1px"></div>
<div class="a" style="left:1698px;top:388px;width:175px;height:20px;background:#0f0f0f;border-radius:3px"></div>
<div class="t" style="left:1705px;top:391.5px;font-size:12px;color:#d8d8d8;transform:scaleX(0.935);transform-origin:left">SK_LAVIFV</div>
<svg style="left:1856px;top:395.0px" width="10" height="7"><path d="M1 1l4 4l4 -4" fill="none" stroke="#d0d0d0" stroke-width="1.5"/></svg>
<svg style="left:1703px;top:414px" width="16" height="16"><path d="M13 3.5A6.5 6.5 0 1 0 13 12.5" fill="none" stroke="#c8c8c8" stroke-width="1.6"/><path d="M14 8H5M8 4.5L4.5 8L8 11.5" fill="none" stroke="#c8c8c8" stroke-width="1.6"/></svg>
<svg style="left:1729px;top:414px" width="17" height="17"><path d="M1 1h5l2 2h4v4H1z" fill="#c0c0c0"/><path d="M1 4h11v10H1z" fill="#c0c0c0"/><circle cx="11.5" cy="11" r="3.6" fill="#1f1f1f" stroke="#c0c0c0" stroke-width="1.3"/><path d="M9 13.5l-2.5 2.5" stroke="#c0c0c0" stroke-width="1.4"/></svg>
<svg style="left:1879px;top:405px" width="16" height="12"><path d="M5 1L1.5 4.5L5 8M1.5 4.5H9.5A4 4 0 0 1 9.5 11H7" fill="none" stroke="#c0c0c0" stroke-width="1.5"/></svg>
<div class="a" style="left:1437px;top:441px;width:462px;height:26px;background:#1f1f1f"></div>
<div class="a" style="left:1626px;top:441px;width:1px;height:26px;background:#151515"></div>
<div class="a" style="left:1876px;top:441px;width:1px;height:26px;background:#191919"></div>
<div class="t" style="left:1459px;top:448.0px;font-size:12px;color:#c0c0c0;transform:scaleX(0.935);transform-origin:left">Skin Cache Usage</div>
<div class="t" style="left:1639px;top:447.5px;font-size:12px;color:#c8c8c8;transform:scaleX(0.935);transform-origin:left">0 Array elements</div>
<svg style="left:1764px;top:446px" width="16" height="16"><circle cx="8" cy="8" r="6.8" fill="none" stroke="#c8c8c8" stroke-width="1.3"/><path d="M8 4.5v7M4.5 8h7" stroke="#c8c8c8" stroke-width="1.4"/></svg>
<svg style="left:1791px;top:446px" width="15" height="16"><path d="M1 3h13M5 3V1h5v2" fill="none" stroke="#c8c8c8" stroke-width="1.4"/><path d="M3 5h9l-1 10H4z" fill="none" stroke="#c8c8c8" stroke-width="1.5"/><path d="M6 7v6M9 7v6" stroke="#c8c8c8" stroke-width="1.2"/></svg>
<div class="a" style="left:1437px;top:468px;width:462px;height:25px;background:#2e2e2e"></div>
<svg style="left:1442px;top:478.0px" width="10" height="7"><path d="M0 0h9l-4.5 6z" fill="#6a6a6a"/></svg>
<div class="t" style="left:1459px;top:474.5px;font-size:12px;font-weight:bold;color:#c8c8c8;transform:scaleX(0.87);transform-origin:left">Materials</div>
<div class="a" style="left:1437px;top:494px;width:462px;height:57px;background:#1f1f1f"></div>
<div class="a" style="left:1626px;top:494px;width:1px;height:57px;background:#151515"></div>
<div class="a" style="left:1876px;top:494px;width:1px;height:57px;background:#191919"></div>
<div class="t" style="left:1459px;top:513.0px;font-size:12px;color:#c0c0c0;transform:scaleX(0.935);transform-origin:left">Element 0</div>
<div class="a" style="left:1640px;top:500px;width:48px;height:48px;background:#0c0c0c;border-radius:2px"></div>
<div class="a" style="left:1644px;top:503px;width:41px;height:41px;border-radius:50%;background:radial-gradient(circle at 45% 40%,#d6ceae,#bdb392 40%,#948a6c 72%,#4a4434 93%,#2a271f)"></div>
<svg style="left:1644px;top:503px" width="41" height="41"><g fill="none" stroke="rgba(60,55,40,0.3)" stroke-width="1"><path d="M6 14q14 -5 30 0M4 22q16 -4 33 1M8 30q12 3 26 -2"/><path d="M14 6q-4 15 2 30M26 5q5 16 -1 32"/></g></svg>
<div class="a" style="left:1640px;top:546px;width:48px;height:3px;background:#4cc24c;border-radius:1px"></div>
<div class="a" style="left:1698px;top:501px;width:152px;height:19px;background:#0f0f0f;border-radius:3px"></div>
<div class="t" style="left:1705px;top:504.0px;font-size:12px;color:#d8d8d8;transform:scaleX(0.935);transform-origin:left">M_MS_SK_LAVIFV_Hull</div>
<svg style="left:1833px;top:507.5px" width="10" height="7"><path d="M1 1l4 4l4 -4" fill="none" stroke="#d0d0d0" stroke-width="1.5"/></svg>
<svg style="left:1703px;top:526px" width="16" height="16"><path d="M13 3.5A6.5 6.5 0 1 0 13 12.5" fill="none" stroke="#c8c8c8" stroke-width="1.6"/><path d="M14 8H5M8 4.5L4.5 8L8 11.5" fill="none" stroke="#c8c8c8" stroke-width="1.6"/></svg>
<svg style="left:1729px;top:526px" width="17" height="17"><path d="M1 1h5l2 2h4v4H1z" fill="#c0c0c0"/><path d="M1 4h11v10H1z" fill="#c0c0c0"/><circle cx="11.5" cy="11" r="3.6" fill="#1f1f1f" stroke="#c0c0c0" stroke-width="1.3"/><path d="M9 13.5l-2.5 2.5" stroke="#c0c0c0" stroke-width="1.4"/></svg>
<svg style="left:1757px;top:527px" width="15" height="15"><rect x="0" y="0" width="3" height="3" fill="#c8c8c8"/><rect x="0" y="6" width="3" height="3" fill="#c8c8c8"/><rect x="0" y="12" width="3" height="3" fill="#c8c8c8"/><rect x="3" y="3" width="3" height="3" fill="#c8c8c8"/><rect x="3" y="9" width="3" height="3" fill="#c8c8c8"/><rect x="6" y="0" width="3" height="3" fill="#c8c8c8"/><rect x="6" y="6" width="3" height="3" fill="#c8c8c8"/><rect x="6" y="12" width="3" height="3" fill="#c8c8c8"/><rect x="9" y="3" width="3" height="3" fill="#c8c8c8"/><rect x="9" y="9" width="3" height="3" fill="#c8c8c8"/><rect x="12" y="0" width="3" height="3" fill="#c8c8c8"/><rect x="12" y="6" width="3" height="3" fill="#c8c8c8"/><rect x="12" y="12" width="3" height="3" fill="#c8c8c8"/><rect x="0.5" y="0.5" width="14" height="14" fill="none" stroke="#c8c8c8" stroke-width="1"/></svg>
<svg style="left:1776px;top:531px" width="10" height="7"><path d="M1 1l4 4l4 -4" fill="none" stroke="#c8c8c8" stroke-width="1.4"/></svg>
<svg style="left:1879px;top:518.0px" width="16" height="12"><path d="M5 1L1.5 4.5L5 8M1.5 4.5H9.5A4 4 0 0 1 9.5 11H7" fill="none" stroke="#c0c0c0" stroke-width="1.5"/></svg>
<div class="a" style="left:1437px;top:552px;width:462px;height:57px;background:#1f1f1f"></div>
<div class="a" style="left:1626px;top:552px;width:1px;height:57px;background:#151515"></div>
<div class="a" style="left:1876px;top:552px;width:1px;height:57px;background:#191919"></div>
<div class="t" style="left:1459px;top:571.0px;font-size:12px;color:#c0c0c0;transform:scaleX(0.935);transform-origin:left">Element 1</div>
<div class="a" style="left:1640px;top:558px;width:48px;height:48px;background:#0c0c0c;border-radius:2px"></div>
<div class="a" style="left:1644px;top:561px;width:41px;height:41px;border-radius:50%;background:radial-gradient(circle at 45% 40%,#d6ceae,#bdb392 40%,#948a6c 72%,#4a4434 93%,#2a271f)"></div>
<svg style="left:1644px;top:561px" width="41" height="41"><g fill="none" stroke="rgba(60,55,40,0.3)" stroke-width="1"><path d="M6 14q14 -5 30 0M4 22q16 -4 33 1M8 30q12 3 26 -2"/><path d="M14 6q-4 15 2 30M26 5q5 16 -1 32"/></g></svg>
<div class="a" style="left:1640px;top:604px;width:48px;height:3px;background:#4cc24c;border-radius:1px"></div>
<div class="a" style="left:1698px;top:559px;width:163px;height:19px;background:#0f0f0f;border-radius:3px"></div>
<div class="t" style="left:1705px;top:562.0px;font-size:12px;color:#d8d8d8;transform:scaleX(0.935);transform-origin:left">M_MS_SK_LAVIFV_Turret</div>
<svg style="left:1844px;top:565.5px" width="10" height="7"><path d="M1 1l4 4l4 -4" fill="none" stroke="#d0d0d0" stroke-width="1.5"/></svg>
<svg style="left:1703px;top:584px" width="16" height="16"><path d="M13 3.5A6.5 6.5 0 1 0 13 12.5" fill="none" stroke="#c8c8c8" stroke-width="1.6"/><path d="M14 8H5M8 4.5L4.5 8L8 11.5" fill="none" stroke="#c8c8c8" stroke-width="1.6"/></svg>
<svg style="left:1729px;top:584px" width="17" height="17"><path d="M1 1h5l2 2h4v4H1z" fill="#c0c0c0"/><path d="M1 4h11v10H1z" fill="#c0c0c0"/><circle cx="11.5" cy="11" r="3.6" fill="#1f1f1f" stroke="#c0c0c0" stroke-width="1.3"/><path d="M9 13.5l-2.5 2.5" stroke="#c0c0c0" stroke-width="1.4"/></svg>
<svg style="left:1757px;top:585px" width="15" height="15"><rect x="0" y="0" width="3" height="3" fill="#c8c8c8"/><rect x="0" y="6" width="3" height="3" fill="#c8c8c8"/><rect x="0" y="12" width="3" height="3" fill="#c8c8c8"/><rect x="3" y="3" width="3" height="3" fill="#c8c8c8"/><rect x="3" y="9" width="3" height="3" fill="#c8c8c8"/><rect x="6" y="0" width="3" height="3" fill="#c8c8c8"/><rect x="6" y="6" width="3" height="3" fill="#c8c8c8"/><rect x="6" y="12" width="3" height="3" fill="#c8c8c8"/><rect x="9" y="3" width="3" height="3" fill="#c8c8c8"/><rect x="9" y="9" width="3" height="3" fill="#c8c8c8"/><rect x="12" y="0" width="3" height="3" fill="#c8c8c8"/><rect x="12" y="6" width="3" height="3" fill="#c8c8c8"/><rect x="12" y="12" width="3" height="3" fill="#c8c8c8"/><rect x="0.5" y="0.5" width="14" height="14" fill="none" stroke="#c8c8c8" stroke-width="1"/></svg>
<svg style="left:1776px;top:589px" width="10" height="7"><path d="M1 1l4 4l4 -4" fill="none" stroke="#c8c8c8" stroke-width="1.4"/></svg>
<svg style="left:1879px;top:576.0px" width="16" height="12"><path d="M5 1L1.5 4.5L5 8M1.5 4.5H9.5A4 4 0 0 1 9.5 11H7" fill="none" stroke="#c0c0c0" stroke-width="1.5"/></svg>
<div class="a" style="left:1437px;top:610px;width:462px;height:57px;background:#1f1f1f"></div>
<div class="a" style="left:1626px;top:610px;width:1px;height:57px;background:#151515"></div>
<div class="a" style="left:1876px;top:610px;width:1px;height:57px;background:#191919"></div>
<div class="t" style="left:1459px;top:629.0px;font-size:12px;color:#c0c0c0;transform:scaleX(0.935);transform-origin:left">Element 2</div>
<div class="a" style="left:1640px;top:616px;width:48px;height:48px;background:#0c0c0c;border-radius:2px"></div>
<div class="a" style="left:1644px;top:619px;width:41px;height:41px;border-radius:50%;background:radial-gradient(circle at 45% 40%,#d6ceae,#bdb392 40%,#948a6c 72%,#4a4434 93%,#2a271f)"></div>
<svg style="left:1644px;top:619px" width="41" height="41"><g fill="none" stroke="rgba(60,55,40,0.3)" stroke-width="1"><path d="M6 14q14 -5 30 0M4 22q16 -4 33 1M8 30q12 3 26 -2"/><path d="M14 6q-4 15 2 30M26 5q5 16 -1 32"/></g></svg>
<div class="a" style="left:1640px;top:662px;width:48px;height:3px;background:#4cc24c;border-radius:1px"></div>
<div class="a" style="left:1698px;top:617px;width:168px;height:19px;background:#0f0f0f;border-radius:3px"></div>
<div class="t" style="left:1705px;top:620.0px;font-size:12px;color:#d8d8d8;transform:scaleX(0.935);transform-origin:left">M_MS_SK_LAVIFV_Wheels</div>
<svg style="left:1849px;top:623.5px" width="10" height="7"><path d="M1 1l4 4l4 -4" fill="none" stroke="#d0d0d0" stroke-width="1.5"/></svg>
<svg style="left:1703px;top:642px" width="16" height="16"><path d="M13 3.5A6.5 6.5 0 1 0 13 12.5" fill="none" stroke="#c8c8c8" stroke-width="1.6"/><path d="M14 8H5M8 4.5L4.5 8L8 11.5" fill="none" stroke="#c8c8c8" stroke-width="1.6"/></svg>
<svg style="left:1729px;top:642px" width="17" height="17"><path d="M1 1h5l2 2h4v4H1z" fill="#c0c0c0"/><path d="M1 4h11v10H1z" fill="#c0c0c0"/><circle cx="11.5" cy="11" r="3.6" fill="#1f1f1f" stroke="#c0c0c0" stroke-width="1.3"/><path d="M9 13.5l-2.5 2.5" stroke="#c0c0c0" stroke-width="1.4"/></svg>
<svg style="left:1757px;top:643px" width="15" height="15"><rect x="0" y="0" width="3" height="3" fill="#c8c8c8"/><rect x="0" y="6" width="3" height="3" fill="#c8c8c8"/><rect x="0" y="12" width="3" height="3" fill="#c8c8c8"/><rect x="3" y="3" width="3" height="3" fill="#c8c8c8"/><rect x="3" y="9" width="3" height="3" fill="#c8c8c8"/><rect x="6" y="0" width="3" height="3" fill="#c8c8c8"/><rect x="6" y="6" width="3" height="3" fill="#c8c8c8"/><rect x="6" y="12" width="3" height="3" fill="#c8c8c8"/><rect x="9" y="3" width="3" height="3" fill="#c8c8c8"/><rect x="9" y="9" width="3" height="3" fill="#c8c8c8"/><rect x="12" y="0" width="3" height="3" fill="#c8c8c8"/><rect x="12" y="6" width="3" height="3" fill="#c8c8c8"/><rect x="12" y="12" width="3" height="3" fill="#c8c8c8"/><rect x="0.5" y="0.5" width="14" height="14" fill="none" stroke="#c8c8c8" stroke-width="1"/></svg>
<svg style="left:1776px;top:647px" width="10" height="7"><path d="M1 1l4 4l4 -4" fill="none" stroke="#c8c8c8" stroke-width="1.4"/></svg>
<svg style="left:1879px;top:634.0px" width="16" height="12"><path d="M5 1L1.5 4.5L5 8M1.5 4.5H9.5A4 4 0 0 1 9.5 11H7" fill="none" stroke="#c0c0c0" stroke-width="1.5"/></svg>
<div class="a" style="left:1437px;top:668px;width:462px;height:57px;background:#1f1f1f"></div>
<div class="a" style="left:1626px;top:668px;width:1px;height:57px;background:#151515"></div>
<div class="a" style="left:1876px;top:668px;width:1px;height:57px;background:#191919"></div>
<div class="t" style="left:1459px;top:687.0px;font-size:12px;color:#c0c0c0;transform:scaleX(0.935);transform-origin:left">Element 3</div>
<div class="a" style="left:1640px;top:674px;width:48px;height:50px;background:#141414;border-radius:2px"></div>
<div class="t" style="left:1664px;top:695px;font-size:9px;color:#e0e0e0;transform:translateX(-50%)">None</div>
<div class="a" style="left:1698px;top:675px;width:104px;height:19px;background:#0f0f0f;border-radius:3px"></div>
<div class="t" style="left:1705px;top:678.0px;font-size:12px;color:#d8d8d8;transform:scaleX(0.935);transform-origin:left">None</div>
<svg style="left:1785px;top:681.5px" width="10" height="7"><path d="M1 1l4 4l4 -4" fill="none" stroke="#d0d0d0" stroke-width="1.5"/></svg>
<svg style="left:1703px;top:700px" width="16" height="16"><path d="M13 3.5A6.5 6.5 0 1 0 13 12.5" fill="none" stroke="#c8c8c8" stroke-width="1.6"/><path d="M14 8H5M8 4.5L4.5 8L8 11.5" fill="none" stroke="#c8c8c8" stroke-width="1.6"/></svg>
<svg style="left:1729px;top:700px" width="17" height="17"><path d="M1 1h5l2 2h4v4H1z" fill="#c0c0c0"/><path d="M1 4h11v10H1z" fill="#c0c0c0"/><circle cx="11.5" cy="11" r="3.6" fill="#1f1f1f" stroke="#c0c0c0" stroke-width="1.3"/><path d="M9 13.5l-2.5 2.5" stroke="#c0c0c0" stroke-width="1.4"/></svg>
<svg style="left:1757px;top:701px" width="15" height="15"><rect x="0" y="0" width="3" height="3" fill="#5a5a5a"/><rect x="0" y="6" width="3" height="3" fill="#5a5a5a"/><rect x="0" y="12" width="3" height="3" fill="#5a5a5a"/><rect x="3" y="3" width="3" height="3" fill="#5a5a5a"/><rect x="3" y="9" width="3" height="3" fill="#5a5a5a"/><rect x="6" y="0" width="3" height="3" fill="#5a5a5a"/><rect x="6" y="6" width="3" height="3" fill="#5a5a5a"/><rect x="6" y="12" width="3" height="3" fill="#5a5a5a"/><rect x="9" y="3" width="3" height="3" fill="#5a5a5a"/><rect x="9" y="9" width="3" height="3" fill="#5a5a5a"/><rect x="12" y="0" width="3" height="3" fill="#5a5a5a"/><rect x="12" y="6" width="3" height="3" fill="#5a5a5a"/><rect x="12" y="12" width="3" height="3" fill="#5a5a5a"/><rect x="0.5" y="0.5" width="14" height="14" fill="none" stroke="#5a5a5a" stroke-width="1"/></svg>
<svg style="left:1776px;top:705px" width="10" height="7"><path d="M1 1l4 4l4 -4" fill="none" stroke="#5a5a5a" stroke-width="1.4"/></svg>
<svg style="left:1879px;top:692.0px" width="16" height="12"><path d="M5 1L1.5 4.5L5 8M1.5 4.5H9.5A4 4 0 0 1 9.5 11H7" fill="none" stroke="#c0c0c0" stroke-width="1.5"/></svg>
<div class="a" style="left:1437px;top:726px;width:462px;height:26px;background:#2e2e2e"></div>
<svg style="left:1442px;top:736.5px" width="10" height="7"><path d="M0 0h9l-4.5 6z" fill="#6a6a6a"/></svg>
<div class="t" style="left:1459px;top:733.0px;font-size:12px;font-weight:bold;color:#c8c8c8;transform:scaleX(0.87);transform-origin:left">Default</div>
<div class="a" style="left:1437px;top:753px;width:462px;height:26px;background:#1f1f1f"></div>
<div class="a" style="left:1626px;top:753px;width:1px;height:26px;background:#151515"></div>
<div class="a" style="left:1876px;top:753px;width:1px;height:26px;background:#191919"></div>
<div class="t" style="left:1459px;top:760.0px;font-size:12px;color:#c0c0c0;transform:scaleX(0.935);transform-origin:left">Gun Pitch</div>
<div class="a" style="left:1640px;top:758px;width:123px;height:18px;background:#0f0f0f;border-radius:3px"></div>
<div class="t" style="left:1647px;top:760.5px;font-size:12px;color:#e0e0e0">0.0</div>
<div class="a" style="left:1437px;top:780px;width:462px;height:26px;background:#1f1f1f"></div>
<div class="a" style="left:1626px;top:780px;width:1px;height:26px;background:#151515"></div>
<div class="a" style="left:1876px;top:780px;width:1px;height:26px;background:#191919"></div>
<div class="t" style="left:1459px;top:787.0px;font-size:12px;color:#c0c0c0;transform:scaleX(0.935);transform-origin:left">Turret Yaw</div>
<div class="a" style="left:1640px;top:785px;width:123px;height:18px;background:#0f0f0f;border-radius:3px"></div>
<div class="t" style="left:1647px;top:787.5px;font-size:12px;color:#e0e0e0">0.0</div>
<div class="a" style="left:1437px;top:807px;width:462px;height:26px;background:#1f1f1f"></div>
<div class="a" style="left:1626px;top:807px;width:1px;height:26px;background:#151515"></div>
<div class="a" style="left:1876px;top:807px;width:1px;height:26px;background:#191919"></div>
<div class="t" style="left:1459px;top:814.0px;font-size:12px;color:#c0c0c0;transform:scaleX(0.935);transform-origin:left">Tank Torque</div>
<div class="a" style="left:1640px;top:812px;width:123px;height:18px;background:#0f0f0f;border-radius:3px"></div>
<div class="t" style="left:1647px;top:814.5px;font-size:12px;color:#e0e0e0">50.0</div>
<div class="a" style="left:1437px;top:834px;width:462px;height:26px;background:#1f1f1f"></div>
<div class="a" style="left:1626px;top:834px;width:1px;height:26px;background:#151515"></div>
<div class="a" style="left:1876px;top:834px;width:1px;height:26px;background:#191919"></div>
<div class="t" style="left:1459px;top:841.0px;font-size:12px;color:#c0c0c0;transform:scaleX(0.935);transform-origin:left">Door Value</div>
<div class="a" style="left:1640px;top:839px;width:123px;height:18px;background:#0f0f0f;border-radius:3px"></div>
<div class="t" style="left:1647px;top:841.5px;font-size:12px;color:#e0e0e0">0.0</div>
<div class="a" style="left:1437px;top:861px;width:462px;height:26px;background:#1f1f1f"></div>
<div class="a" style="left:1626px;top:861px;width:1px;height:26px;background:#151515"></div>
<div class="a" style="left:1876px;top:861px;width:1px;height:26px;background:#191919"></div>
<div class="t" style="left:1459px;top:868.0px;font-size:12px;color:#c0c0c0;transform:scaleX(0.935);transform-origin:left">Is Door Open</div>
<div class="a" style="left:1640px;top:867px;width:16px;height:16px;background:#111;border-radius:2px;border:1px solid #1a1a1a"></div>
<div class="a" style="left:1437px;top:888px;width:462px;height:26px;background:#2e2e2e"></div>
<svg style="left:1442px;top:898.5px" width="10" height="7"><path d="M0 0h9l-4.5 6z" fill="#6a6a6a"/></svg>
<div class="t" style="left:1459px;top:895.0px;font-size:12px;font-weight:bold;color:#c8c8c8;transform:scaleX(0.87);transform-origin:left">Actor Tick</div>
<div class="a" style="left:1437px;top:915px;width:462px;height:26px;background:#1f1f1f"></div>
<div class="a" style="left:1626px;top:915px;width:1px;height:26px;background:#151515"></div>
<div class="a" style="left:1876px;top:915px;width:1px;height:26px;background:#191919"></div>
<div class="t" style="left:1459px;top:922.0px;font-size:12px;color:#c0c0c0;transform:scaleX(0.935);transform-origin:left">Start with Tick Enabled</div>
<div class="a" style="left:1640px;top:921px;width:16px;height:16px;background:#111;border-radius:2px;border:1px solid #1a1a1a"></div>
<svg style="left:1641px;top:922px" width="14" height="14"><path d="M2.5 7.5l3 3l6-7" stroke="#2a8ae8" stroke-width="2" fill="none"/></svg>
<div class="a" style="left:1437px;top:942px;width:462px;height:26px;background:#1f1f1f"></div>
<div class="a" style="left:1626px;top:942px;width:1px;height:26px;background:#151515"></div>
<div class="a" style="left:1876px;top:942px;width:1px;height:26px;background:#191919"></div>
<div class="t" style="left:1459px;top:949.0px;font-size:12px;color:#c0c0c0;transform:scaleX(0.935);transform-origin:left">Tick Interval (secs)</div>
<div class="a" style="left:1640px;top:947px;width:123px;height:18px;background:#0f0f0f;border-radius:3px"></div>
<div class="t" style="left:1647px;top:949.5px;font-size:12px;color:#e0e0e0">0.0</div>
<div class="a" style="left:1437px;top:969px;width:462px;height:26px;background:#1f1f1f"></div>
<div class="a" style="left:1626px;top:969px;width:1px;height:26px;background:#151515"></div>
<div class="a" style="left:1876px;top:969px;width:1px;height:26px;background:#191919"></div>
<div class="t" style="left:1459px;top:976.0px;font-size:12px;color:#c0c0c0;transform:scaleX(0.935);transform-origin:left">Allow Tick Before Begin Play</div>
<div class="a" style="left:1640px;top:975px;width:16px;height:16px;background:#111;border-radius:2px;border:1px solid #1a1a1a"></div><!-- ============ STATUS BAR ============ -->
<div class="a" style="left:0;top:997px;width:1913px;height:3px;background:#151515"></div>
<div class="a" style="left:0;top:1000px;width:1913px;height:32px;background:#232323"></div>
<div class="a" style="left:131px;top:1000px;width:2px;height:32px;background:#171717"></div>
<div class="a" style="left:236px;top:1000px;width:2px;height:32px;background:#171717"></div>
<div class="a" style="left:604px;top:1000px;width:2px;height:32px;background:#171717"></div>
<div class="a" style="left:1676px;top:1000px;width:2px;height:32px;background:#171717"></div>
<div class="a" style="left:0;top:1000px;width:2px;height:32px;background:#171717"></div>
<svg style="left:10px;top:1007px" width="18" height="18"><path d="M1 1h5l2 2h4v4H1z" fill="#c0c0c0"/><path d="M1 4h11v10H1z" fill="#c0c0c0"/><circle cx="11.5" cy="11" r="3.8" fill="#232323" stroke="#c0c0c0" stroke-width="1.4"/><path d="M9 13.5l-3 3" stroke="#c0c0c0" stroke-width="1.5"/></svg>
<div class="t" style="left:31px;top:1010px;font-size:13px;color:#c8c8c8">Content Drawer</div>
<svg style="left:145px;top:1008px" width="13" height="16"><rect x="0" y="2" width="12" height="14" fill="#c0c0c0"/><path d="M3 0v3M6 0v3M9 0v3" stroke="#c0c0c0" stroke-width="1"/><path d="M2 8l3 2l-3 2M6 13h4" stroke="#232323" stroke-width="1.3" fill="none"/></svg>
<div class="t" style="left:163px;top:1010px;font-size:13px;color:#c8c8c8">Output Log</div>
<svg style="left:250px;top:1009px" width="18" height="14"><rect x="0.7" y="0.7" width="16" height="12.5" fill="none" stroke="#c0c0c0" stroke-width="1.3"/><path d="M0.7 3h16" stroke="#c0c0c0" stroke-width="1.3"/><path d="M3.5 6l3 2.5l-3 2.5M8 11h5" stroke="#c0c0c0" stroke-width="1.2" fill="none"/></svg>
<div class="t" style="left:271px;top:1010px;font-size:13px;color:#c8c8c8">Cmd</div>
<svg style="left:303px;top:1013px" width="10" height="7"><path d="M1 1l4 4l4 -4" fill="none" stroke="#c0c0c0" stroke-width="1.5"/></svg>
<div class="a" style="left:329px;top:1006px;width:265px;height:20px;background:#0f0f0f;border-radius:3px"></div>
<div class="t" style="left:336px;top:1010px;font-size:12px;font-family:'Liberation Mono';color:#555">Enter Console Command</div>
<svg style="left:1688px;top:1007px" width="18" height="18"><path d="M1 1h11l3 3v11H1z" fill="#b8b8b8"/><rect x="3.5" y="1" width="7" height="4" fill="#232323"/><rect x="3" y="9" width="8" height="6" fill="#232323"/><path d="M14 10l1.2 2.5l2.6.3l-1.9 1.8l.5 2.6l-2.4-1.3l-2.4 1.3l.5-2.6l-1.9-1.8l2.6-.3z" fill="#e0e0e0"/></svg>
<div class="t" style="left:1710px;top:1010px;font-size:13px;color:#c8c8c8">1 Unsaved</div>
<svg style="left:1789px;top:1007px" width="15" height="18"><circle cx="3" cy="3" r="2.3" fill="none" stroke="#d0d0d0" stroke-width="1.5"/><circle cx="12" cy="3" r="2.3" fill="none" stroke="#d0d0d0" stroke-width="1.5"/><circle cx="3" cy="15" r="2.3" fill="#d0d0d0"/><path d="M3 5v8M12 5q0 5 -9 7" fill="none" stroke="#d0d0d0" stroke-width="1.5"/></svg>
<div class="t" style="left:1809px;top:1010px;font-size:13px;color:#c8c8c8">Revision Control</div>
<svg style="left:1903px;top:1022px" width="8" height="8"><path d="M7 1v6H1" stroke="#777" stroke-width="1" fill="none"/></svg>
<!-- ============ TASKBAR ============ -->
<div class="a" style="left:0;top:1032px;width:1913px;height:42px;background:linear-gradient(180deg,#1e2545,#1c2341)"></div>
<div class="a" style="left:0;top:1032px;width:1913px;height:1px;background:#2c3350"></div>
<div class="a" style="left:1780px;top:1006px;width:1px;height:20px;background:#1c1c1c"></div>
<div class="a" style="left:1007px;top:1036px;width:39px;height:38px;background:#2a2d48;border-radius:4px"></div>
<div class="a" style="left:1019px;top:1071px;width:16px;height:3px;background:#e060d0;border-radius:2px"></div>
<div class="a" style="left:805px;top:1071px;width:5px;height:3px;background:#8a8ca0;border-radius:2px"></div>
<div class="a" style="left:849px;top:1071px;width:5px;height:3px;background:#8a8ca0;border-radius:2px"></div>
<div class="a" style="left:893px;top:1071px;width:5px;height:3px;background:#8a8ca0;border-radius:2px"></div>
<div class="a" style="left:937px;top:1071px;width:5px;height:3px;background:#8a8ca0;border-radius:2px"></div>
<div class="a" style="left:981px;top:1071px;width:5px;height:3px;background:#8a8ca0;border-radius:2px"></div>
<div class="a" style="left:1069px;top:1071px;width:5px;height:3px;background:#8a8ca0;border-radius:2px"></div>
<div class="a" style="left:1113px;top:1071px;width:5px;height:3px;background:#8a8ca0;border-radius:2px"></div>
<div class="a" style="left:1157px;top:1071px;width:5px;height:3px;background:#8a8ca0;border-radius:2px"></div>
<svg style="left:751px;top:1044px" width="24" height="24"><g fill="#4cc2ff"><rect x="0" y="0" width="11" height="11"/><rect x="12.5" y="0" width="11" height="11"/><rect x="0" y="12.5" width="11" height="11"/><rect x="12.5" y="12.5" width="11" height="11"/></g></svg>
<svg style="left:795px;top:1044px" width="24" height="24"><rect x="0" y="0" width="24" height="24" rx="3" fill="#1e78c8"/><rect x="4" y="4" width="6" height="15" rx="1" fill="#fff"/><rect x="13" y="4" width="6" height="9" rx="1" fill="#fff"/></svg>
<svg style="left:839px;top:1043px" width="25" height="25"><circle cx="12.5" cy="12.5" r="12" fill="#e33b2e"/><path d="M12.5 12.5L2.1 18.5A12 12 0 0 0 18.5 22.9z" fill="#2aa84a"/><path d="M12.5 12.5L18.5 22.9A12 12 0 0 0 24.5 12.5z" fill="#fcc934"/><path d="M12.5 12.5h12A12 12 0 0 0 23 6.5H12.5z" fill="#fcc934"/><circle cx="12.5" cy="12.5" r="5.6" fill="#fff"/><circle cx="12.5" cy="12.5" r="4.4" fill="#1a73e8"/></svg>
<svg style="left:883px;top:1043px" width="28" height="25"><circle cx="12" cy="13" r="12" fill="#5865f2"/><path d="M6 9q6-3 12 0l1.5 7q-2 2-4 2l-1-1.5q-2.5 .6-5 0l-1 1.5q-2 0-4-2z" fill="#fff"/><circle cx="9.5" cy="13" r="1.4" fill="#5865f2"/><circle cx="14.5" cy="13" r="1.4" fill="#5865f2"/><circle cx="21" cy="5" r="5.5" fill="#e8444a"/><text x="21" y="8.5" font-size="9" fill="#fff" text-anchor="middle" font-family="Liberation Sans">8</text></svg>
<svg style="left:926px;top:1045px" width="25" height="22"><path d="M0 2h9l2 2h14v18H0z" fill="#e8a820"/><rect x="0" y="6" width="25" height="16" fill="#ffd24a"/><rect x="7" y="14" width="11" height="8" fill="#2a7ad8"/></svg>
<svg style="left:970px;top:1043px" width="25" height="25"><circle cx="12.5" cy="12.5" r="12" fill="#1b8ee0"/><path d="M2 15q2-10 12-10q10 1 10 9q0 4-5 4q-4 0-4-3q0-3 3-3q-3-4-8-2q-5 2-4 9q-3-1-4-4z" fill="#3ec47a"/><path d="M6 13q3-5 9-3q-5 1-5 6q1 6 9 5q-6 4-12 0q-3-3-1-8z" fill="#0c5aa8"/></svg>
<svg style="left:1014px;top:1042px" width="26" height="26"><circle cx="13" cy="13" r="12" fill="#0a0a0a" stroke="#fff" stroke-width="1.6"/><path d="M8 9v6q0 4 5 4q4 0 5-3v-8l-2 1v6q-1 2-3 2q-2 0-2-2v-7z" fill="#fff"/></svg>
<svg style="left:1058px;top:1043px" width="25" height="25"><circle cx="12.5" cy="12" r="11" fill="#fff"/><circle cx="12.5" cy="12" r="9.3" fill="#25d366"/><path d="M2 24l2-6 4 3z" fill="#fff"/><path d="M8.5 8q1-1.5 2 0l1 2q-.5 1-1 1.5q1 2.5 3.5 3.5q.5-.5 1.5-1l2 1q1 1 0 2q-2 2-6-1q-4-3-3-8z" fill="#fff"/></svg>
<svg style="left:1101px;top:1043px" width="27" height="25"><rect x="9" y="3" width="17" height="16" fill="#2b8ce8"/><rect x="16" y="3" width="10" height="8" fill="#50b0f8"/><rect x="0" y="6" width="14" height="13" rx="1.5" fill="#0a5ab8"/><text x="7" y="16" font-size="9" font-weight="bold" fill="#fff" text-anchor="middle" font-family="Liberation Sans">O</text><rect x="11" y="18" width="15" height="7" fill="#1a3a6a"/><text x="18.5" y="24" font-size="6" font-weight="bold" fill="#fff" text-anchor="middle" font-family="Liberation Sans">PRE</text></svg>
<svg style="left:1146px;top:1044px" width="24" height="24"><rect x="0" y="0" width="24" height="24" fill="#cfeee6"/><path d="M3 20V4h3.5l5.5 8l5.5-8H21v16h-3.5V10l-5.5 7.5L6.5 10v10z" fill="#25a89a"/></svg>
<svg style="left:1673px;top:1050px" width="12" height="8"><path d="M1 7l5-5l5 5" fill="none" stroke="#e8e8e8" stroke-width="1.5"/></svg>
<svg style="left:1700px;top:1047px" width="20" height="16"><path d="M1 5h4l5-4v14l-5-4H1z" fill="none" stroke="#e8e8e8" stroke-width="1.3"/><path d="M13 5q2 3 0 6M15.5 3q3.5 5 0 10" fill="none" stroke="#e8e8e8" stroke-width="1.3"/></svg>
<svg style="left:1737px;top:1045px" width="12" height="19"><rect x="3" y="0.7" width="6" height="11" rx="3" fill="none" stroke="#d070e0" stroke-width="1.4"/><path d="M1 9q0 5 5 5q5 0 5-5M6 14v4M3 18h6" fill="none" stroke="#d070e0" stroke-width="1.4"/></svg>
<svg style="left:1765px;top:1047px" width="20" height="15"><path d="M1 5q9-8 18 0M4 8q6-5 12 0M7 11q3-2.5 6 0" fill="none" stroke="#e8e8e8" stroke-width="1.5"/><circle cx="10" cy="13.5" r="1.4" fill="#e8e8e8"/></svg>
<svg style="left:1789px;top:1047px" width="20" height="16"><path d="M1 5h4l5-4v14l-5-4H1z" fill="none" stroke="#e8e8e8" stroke-width="1.3"/><path d="M13 5q2 3 0 6M15.5 3q3.5 5 0 10" fill="none" stroke="#e8e8e8" stroke-width="1.3"/></svg>
<div class="t" style="left:1823px;top:1042px;font-size:12px;color:#f0f0f0">11:33 PM</div>
<div class="t" style="left:1823px;top:1058px;font-size:12px;color:#f0f0f0">8/1/2023</div>
<svg style="left:1883px;top:1048px" width="18" height="18"><circle cx="9" cy="9" r="8.5" fill="#e040c8"/><text x="9" y="12.8" font-size="10" fill="#fff" text-anchor="middle" font-family="Liberation Sans">2</text></svg></body></html>
